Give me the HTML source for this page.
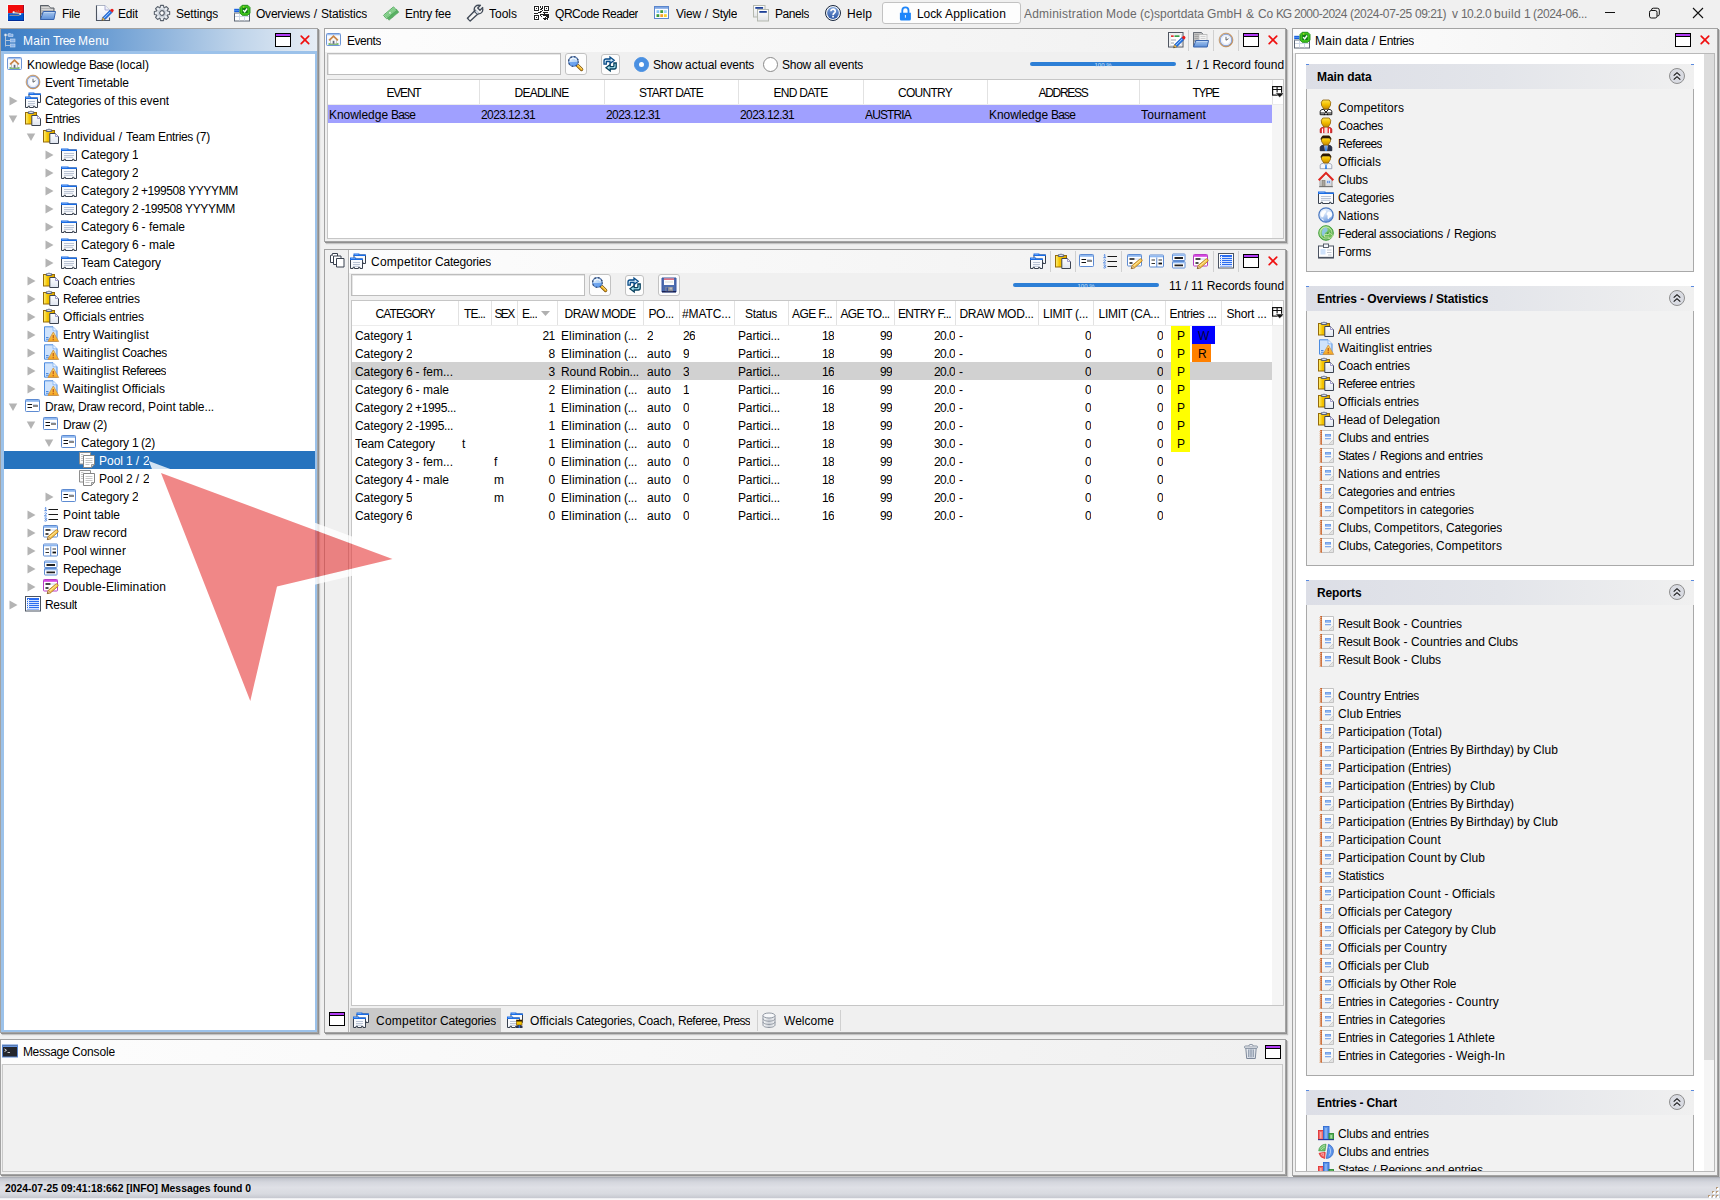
<!DOCTYPE html><html lang="en"><head><meta charset="utf-8"><title>sportdata Administration</title><style>
*{box-sizing:border-box;margin:0;padding:0}
html,body{width:1720px;height:1200px;overflow:hidden}
body{position:relative;background:#f0f0f0;font-family:"Liberation Sans",sans-serif;font-size:12px;color:#000;line-height:18px}
.b{position:absolute}
.t{position:absolute;white-space:nowrap;height:18px;line-height:18px;overflow:hidden;margin-top:1px}
.i{position:absolute;display:block;overflow:visible}
.wd{display:inline-block;white-space:nowrap}
.c{text-align:center}
.r{text-align:right}
.bd{font-weight:bold}
.w{color:#fff}
.g{color:#6a6a6a}
.panel{border:1px solid #a3a3a3;box-shadow:1px 1px 0 #8f8f8f,2px 2px 1px #c4c4c4;background:#f0f0f0}
.ttl{background:linear-gradient(to right,#fdfdfd 0%,#f7f7f7 50%,#f0f0f0 100%)}
.btn{border:1px solid #c2c2c2;border-radius:3px;background:#fdfdfd}
.inp{border:1px solid #bdbdbd;background:#fff;box-shadow:inset 1px 1px 0 #e6e6e6}
.tbl{border:1px solid #c6c6c6;background:#fff}
.vs{width:1px;background:#e2e2e2}
.sep{width:1px;background:#d0d0d0}
.gh{background:linear-gradient(to right,#dcdee6 0%,#e3e5ea 50%,#f0f0f0 100%)}
.gb{border:1px solid #a9a9a9;border-top:none;background:#f2f2f2}
.chev{border:1px solid #8e8e8e;border-radius:50%;background:#d9dbe2}
</style></head><body>
<svg width="0" height="0" style="position:absolute"><defs><linearGradient id="g1" x1="0" y1="0" x2="0" y2="1"><stop offset="0" stop-color="#a9c8ef"/><stop offset="1" stop-color="#5c8fd8"/></linearGradient><linearGradient id="g2" x1="0" y1="0" x2="0" y2="1"><stop offset="0" stop-color="#ffffff"/><stop offset="1" stop-color="#e3e8f4"/></linearGradient><linearGradient id="g4" x1="0" y1="0" x2="0" y2="1"><stop offset="0" stop-color="#ffffff"/><stop offset="1" stop-color="#e2e4e6"/></linearGradient><linearGradient id="g5" x1="0" y1="0" x2="0" y2="1"><stop offset="0" stop-color="#7ea3dc"/><stop offset="1" stop-color="#2f59a6"/></linearGradient><linearGradient id="g6" x1="0" y1="0" x2="0" y2="1"><stop offset="0" stop-color="#ffffff"/><stop offset="1" stop-color="#eef3fb"/></linearGradient><linearGradient id="g7" x1="0" y1="0" x2="1" y2="1"><stop offset="0" stop-color="#e9c9a0"/><stop offset="1" stop-color="#c08850"/></linearGradient><linearGradient id="g8" x1="0" y1="0" x2="0" y2="1"><stop offset="0" stop-color="#ffffff"/><stop offset="1" stop-color="#dfe5f0"/></linearGradient><linearGradient id="g9" x1="0" y1="0" x2="1" y2="0"><stop offset="0" stop-color="#fff27a"/><stop offset="0.35" stop-color="#f5c400"/><stop offset="1" stop-color="#e0a800"/></linearGradient><linearGradient id="g10" x1="0" y1="0" x2="0" y2="1"><stop offset="0" stop-color="#ffd86a"/><stop offset="1" stop-color="#f3a21c"/></linearGradient><linearGradient id="g11" x1="0" y1="0" x2="1" y2="1"><stop offset="0" stop-color="#e8f4ff"/><stop offset="1" stop-color="#8fbcee"/></linearGradient><linearGradient id="g12" x1="0" y1="0" x2="0" y2="1"><stop offset="0" stop-color="#ffe34a"/><stop offset="0.5" stop-color="#f3bf00"/><stop offset="1" stop-color="#c88a00"/></linearGradient><linearGradient id="g13" x1="0" y1="0" x2="0" y2="1"><stop offset="0" stop-color="#fafafa"/><stop offset="1" stop-color="#d4d4d4"/></linearGradient><linearGradient id="g14" x1="0" y1="0" x2="0.5" y2="1"><stop offset="0" stop-color="#f6faff"/><stop offset="0.55" stop-color="#c9dcf6"/><stop offset="1" stop-color="#6f9be0"/></linearGradient><linearGradient id="g15" x1="0" y1="0" x2="0.7" y2="1"><stop offset="0" stop-color="#b8ec9a"/><stop offset="1" stop-color="#3f9e3a"/></linearGradient><linearGradient id="g16" x1="0" y1="0" x2="0" y2="1"><stop offset="0" stop-color="#ffffff"/><stop offset="1" stop-color="#efefef"/></linearGradient><linearGradient id="g17" x1="0" y1="0" x2="1" y2="0"><stop offset="0" stop-color="#f4f6f9"/><stop offset="0.5" stop-color="#c2cad6"/><stop offset="1" stop-color="#eef0f4"/></linearGradient><linearGradient id="g18" x1="0" y1="0" x2="1" y2="0"><stop offset="0" stop-color="#fafbfc"/><stop offset="0.5" stop-color="#cfd3d9"/><stop offset="1" stop-color="#f1f2f4"/></linearGradient></defs></svg>
<svg class="i" style="left:8px;top:5px" width="16" height="16" viewBox="0 0 16 16" ><rect x="-.7" y="-.7" width="17.400" height="17.400" fill="#fbfbfb"/><rect width="16" height="8.200" fill="#f20b0b"/><rect y="8.200" width="16" height="7.800" fill="#0055cc"/><rect y="15" width="16" height="1" fill="#002a96"/><rect x="15.200" width=".8" height="16" fill="#00106a" opacity=".45"/><path d="M7.500 5.600h7" stroke="#8a9a5a" stroke-width=".7" stroke-dasharray="1 1.500"/><path d="M8 6.600h5" stroke="#e85030" stroke-width=".7"/><path d="M5.200 7.400l7 1.400" stroke="#a9a4a8" stroke-width="1.600" stroke-linecap="round"/><circle cx="5.700" cy="7.200" r="1" fill="#f4f8fa"/><circle cx="12.200" cy="9" r="1.100" fill="#f2f2f0"/><path d="M1.500 10.500h10" stroke="#9a948e" stroke-width=".9"/><path d="M2 9.600h8.500" stroke="#3a6ac8" stroke-width=".6"/></svg>
<svg class="i" style="left:40px;top:5px" width="16" height="16" viewBox="0 0 16 16" ><path d="M.5 .5h8l2 2.500h3.500v6h-13.500z" fill="#b5b5b5" stroke="#5a6068"/><path d="M1.500 2.500h8M1.500 4.500h11.500" stroke="#d8d8d8"/><path d="M.5 .5v14" stroke="#5a6068"/><path d="M3.300 6.500h12.200l-1.600 8h-13.400z" fill="url(#g1)" stroke="#3763ad"/><path d="M4 7.500h10.500" stroke="#c4daf5" stroke-width=".8"/></svg>
<span class="t m" style="left:62px;top:4px;letter-spacing:-0.34px;">File</span>
<svg class="i" style="left:96px;top:5px" width="16" height="16" viewBox="0 0 16 16" ><path d="M.5 .5h8.500l4.500 4.500v10.500h-13z" fill="url(#g2)"/><path d="M.5 .3v15.200h13v-3" fill="none" stroke="#4d5562" stroke-width="1.100"/><path d="M.5 .5h8.500l4.500 4.500v4" fill="none" stroke="#9aa3b5" stroke-width=".8"/><path d="M9 .5v4.500h4.500" fill="#eef1f8" stroke="#9a9ccc" stroke-width=".8"/><path d="M5.8 15.6l.9-3.200 7.200-7.200 2.300 2.300-7.200 7.200z" fill="#1f6fe0" stroke="#1a4fb0" stroke-width=".5"/><path d="M7.699999999999999 13.5l6.600-6.600" stroke="#bfe0ff" stroke-width=".9"/><path d="M13.899999999999999 5.199999999999999l1-1a1.300 1.300 0 0 1 2.300 2.300l-1 1z" fill="#e81c1c"/><path d="M5.8 15.6l.9-3.200 2.300 2.300z" fill="#f4c65c" stroke="#a8761a" stroke-width=".5"/><path d="M5.8 15.6l.4-1.300.9.900z" fill="#222"/></svg>
<span class="t m" style="left:118px;top:4px;letter-spacing:-0.17px;">Edit</span>
<svg class="i" style="left:154px;top:5px" width="16" height="16" viewBox="0 0 16 16" ><path d="M13.25 6.06L15.66 6.53L15.66 9.47L13.25 9.94L13.09 10.34L14.46 12.37L12.37 14.46L10.34 13.09L9.94 13.25L9.47 15.66L6.53 15.66L6.06 13.25L5.66 13.09L3.63 14.46L1.54 12.37L2.91 10.34L2.75 9.94L0.34 9.47L0.34 6.53L2.75 6.06L2.91 5.66L1.54 3.63L3.63 1.54L5.66 2.91L6.06 2.75L6.53 0.34L9.47 0.34L9.94 2.75L10.34 2.91L12.37 1.54L14.46 3.63L13.09 5.66z" fill="#e9edf2" stroke="#59616c" stroke-width="1.100" stroke-linejoin="round"/><circle cx="8" cy="8" r="3.900" fill="none" stroke="#b9c0ca" stroke-width=".8"/><circle cx="8" cy="8" r="2.300" fill="#fff" stroke="#59616c" stroke-width="1.200"/></svg>
<span class="t m" style="left:176px;top:4px;letter-spacing:-0.17px;">Settings</span>
<svg class="i" style="left:234px;top:5px" width="16" height="16" viewBox="0 0 16 16" ><rect x=".5" y="8" width="15" height="8" fill="#fff" stroke="#5b6472"/><path d="M.5 8h15" stroke="#aab4c4"/><path d="M1 11.500h14M5.500 8.500v7M10.500 8.500v7" stroke="#cfd9e8"/><rect x=".2" y="3.800" width="5.300" height="3.200" fill="#1660e0"/><path d="M.2 5.400h5.300" stroke="#6fa2f5" stroke-width=".7"/><path d="M8.200 .3h5.600l2.200 2.200v5.600l-2.200 2.200h-5.600l-2.200-2.200v-5.600z" fill="#3fc21d" stroke="#1b8a12" stroke-width=".9"/><rect x="8.300" y="2.600" width="5.400" height="5.400" fill="#0f7a14"/><path d="M9.200 5.100l1.500 1.700 2.400-3.300" fill="none" stroke="#fff" stroke-width="1.400"/><rect x="9" y="1.500" width="1.300" height="1" fill="#e8f020"/></svg>
<span class="t m" style="left:256px;top:4px;word-spacing:-0.34px;"><span class="wd" style="width:54.0px;letter-spacing:-0.22px">Overviews</span> <span class="wd" style="width:5.0px;text-align:center">/</span> <span class="wd" style="width:46.0px;letter-spacing:-0.20px">Statistics</span></span>
<svg class="i" style="left:383px;top:5px" width="16" height="16" viewBox="0 0 16 16" ><g transform="translate(8 8.300) scale(.8) rotate(-40) translate(-8 -8)"><rect x=".5" y="8" width="16" height="5.200" rx=".5" fill="#58b062" stroke="#3f9049" stroke-width=".9" stroke-dasharray="1.200 .8"/><rect x="-.8" y="3.800" width="16.500" height="5.800" rx=".5" fill="#a4e0a8" stroke="#4fa65a" stroke-width="1"/><rect x=".8" y="5.100" width="13.300" height="3.200" fill="#86d08c" stroke="#63b86c" stroke-width=".6"/><circle cx="7.400" cy="6.700" r="1.500" fill="#eefaee" stroke="#63b86c" stroke-width=".5"/></g></svg>
<span class="t m" style="left:405px;top:4px;word-spacing:-0.34px;"><span class="wd" style="width:27.0px;letter-spacing:-0.20px">Entry</span> <span class="wd" style="width:16.0px;letter-spacing:-0.22px">fee</span></span>
<svg class="i" style="left:467px;top:5px" width="16" height="16" viewBox="0 0 16 16" ><path d="M.4 13.200l7.800-8 3.200 3.200-8.200 7.600z" fill="url(#g3)" stroke="#424b58" stroke-width="1.350" stroke-linejoin="round"/><path d="M2.600 14.500l7.300-7.300" stroke="#fff" stroke-width="1"/><circle cx="11.500" cy="4.500" r="4.300" fill="url(#g3)" stroke="#424b58" stroke-width="1.350"/><path d="M10.720 3.020l3.890-3.890 2.260 2.260-3.890 3.890z" fill="#f0f0f0"/><path d="M13.700 0l-2.980 3.020 2.260 2.260 3.020-2.980" fill="none" stroke="#424b58" stroke-width="1.350" stroke-linejoin="round"/><path d="M8.600 5.600l2.800 2.800" stroke="#cfd8e4" stroke-width="1.600"/></svg>
<span class="t m" style="left:489px;top:4px;">Tools</span>
<svg class="i" style="left:534px;top:6px" width="15" height="14" viewBox="0 0 15 14" ><rect x="-.5" y="-.5" width="16" height="15" fill="#fff"/><path d="M0 0h5v1h-5zM6 0h1v1h-1zM8 0h1v1h-1zM10 0h5v1h-5zM0 1h1v1h-1zM4 1h1v1h-1zM6 1h1v1h-1zM8 1h1v1h-1zM10 1h1v1h-1zM14 1h1v1h-1zM0 2h1v1h-1zM2 2h1v1h-1zM4 2h1v1h-1zM7 2h2v1h-2zM10 2h1v1h-1zM12 2h1v1h-1zM14 2h1v1h-1zM0 3h1v1h-1zM4 3h1v1h-1zM6 3h2v1h-2zM10 3h1v1h-1zM14 3h1v1h-1zM0 4h5v1h-5zM8 4h1v1h-1zM10 4h5v1h-5zM6 5h2v1h-2zM4 6h3v1h-3zM9 6h5v1h-5zM0 7h4v1h-4zM10 7h1v1h-1zM6 8h9v1h-9zM0 9h5v1h-5zM6 9h1v1h-1zM9 9h6v1h-6zM0 10h1v1h-1zM4 10h1v1h-1zM7 10h1v1h-1zM12 10h3v1h-3zM0 11h1v1h-1zM2 11h1v1h-1zM4 11h1v1h-1zM11 11h1v1h-1zM13 11h2v1h-2zM0 12h1v1h-1zM4 12h1v1h-1zM9 12h5v1h-5zM0 13h5v1h-5zM10 13h2v1h-2zM13 13h1v1h-1z" fill="#222" shape-rendering="crispEdges"/></svg>
<span class="t m" style="left:555px;top:4px;word-spacing:-0.34px;"><span class="wd" style="width:44.0px;letter-spacing:-0.45px">QRCode</span> <span class="wd" style="width:36.0px;letter-spacing:-0.56px">Reader</span></span>
<svg class="i" style="left:654px;top:5px" width="16" height="16" viewBox="0 0 16 16" ><rect x=".5" y="1.500" width="14" height="12" fill="#fdfeff" stroke="#5b86cc"/><rect x="1" y="2" width="13" height="1.800" fill="#7ea6e4"/><rect x="2.500" y="5.200" width="2.800" height="2.800" fill="#86c4f6"/><rect x="6.300" y="5.200" width="2.800" height="2.800" fill="#3c9c3e"/><rect x="10" y="5.200" width="2.800" height="2.800" fill="#9fd4fa"/><rect x="2.500" y="9.200" width="2.800" height="2.800" fill="#3c9c3e"/><rect x="6.300" y="9.200" width="2.800" height="2.800" fill="#f6a02c"/><rect x="10" y="9.200" width="2.800" height="2.800" fill="#f7d22e"/></svg>
<span class="t m" style="left:676px;top:4px;word-spacing:-0.34px;"><span class="wd" style="width:25.0px;letter-spacing:-0.20px">View</span> <span class="wd" style="width:5.0px;text-align:center">/</span> <span class="wd" style="width:25.0px;letter-spacing:-0.33px">Style</span></span>
<svg class="i" style="left:753px;top:5px" width="16" height="16" viewBox="0 0 16 16" ><rect x=".5" y=".5" width="11.500" height="11.500" fill="url(#g4)" stroke="#b5b9b0"/><rect x="2.300" y="2" width="7.800" height="1.800" fill="#1c3f96"/><rect x="4.500" y="4.500" width="11" height="11.500" fill="url(#g4)" stroke="#b5b9b0"/><rect x="6.300" y="6" width="7.500" height="1.800" fill="#1c3f96"/></svg>
<span class="t m" style="left:775px;top:4px;letter-spacing:-0.45px;">Panels</span>
<svg class="i" style="left:825px;top:5px" width="16" height="16" viewBox="0 0 16 16" ><circle cx="8" cy="8" r="7.500" fill="#f2f6fb" stroke="#17253c" stroke-width="1"/><circle cx="8" cy="8" r="5.900" fill="url(#g5)"/><path d="M5.900 6.300a2.200 2.100 0 1 1 3.400 1.700c-.8.600-1.200.9-1.200 1.900" fill="none" stroke="#fff" stroke-width="1.700"/><rect x="7.200" y="10.800" width="1.700" height="1.700" fill="#fff"/></svg>
<span class="t m" style="left:847px;top:4px;letter-spacing:0.08px;">Help</span>
<div class="b btn" style="left:882px;top:2px;width:139px;height:22px;"></div>
<svg class="i" style="left:899px;top:5.5px" width="16" height="16" viewBox="0 0 16 16" ><path d="M3.300 7.500v-3a3.100 3.100 0 0 1 6.200 0v3" fill="none" stroke="#1e86fa" stroke-width="1.800"/><path d="M.9 6.800h11v6.200a1.500 1.500 0 0 1-1.500 1.500h-8a1.500 1.500 0 0 1-1.500-1.500z" fill="#1e86fa"/><rect x="5.900" y="9" width="1" height="2.700" fill="#e8f2ff"/></svg>
<span class="t m" style="left:917px;top:4px;word-spacing:-0.34px;"><span class="wd" style="width:25.0px;letter-spacing:-0.09px">Lock</span> <span class="wd" style="width:61.0px;letter-spacing:0.21px">Application</span></span>
<span class="t g m" style="left:1024px;top:4px;word-spacing:-0.34px;white-space:pre"><span class="wd" style="width:79.0px;letter-spacing:0.21px">Administration</span> <span class="wd" style="width:31.0px;letter-spacing:0.25px">Mode</span> <span class="wd" style="width:64.0px;letter-spacing:-0.00px">(c)sportdata</span> <span class="wd" style="width:35.0px;letter-spacing:0.08px">GmbH</span> <span class="wd" style="width:10.0px;text-align:center">&amp;</span> <span class="wd" style="width:15.0px;letter-spacing:-0.17px">Co</span> <span class="wd" style="width:15.0px;letter-spacing:-1.16px">KG</span> <span class="wd" style="width:53.0px;letter-spacing:-0.49px">2000-2024</span> <span class="wd" style="width:62.0px;letter-spacing:-0.31px">(2024-07-25</span> <span class="wd" style="width:31.0px;letter-spacing:-0.50px">09:21)</span>  <span class="wd" style="width:6.0px;text-align:center">v</span> <span class="wd" style="width:30.0px;letter-spacing:-0.56px">10.2.0</span> <span class="wd" style="width:27.0px;letter-spacing:0.33px">build</span> <span class="wd" style="width:6.0px;text-align:center">1</span> <span class="wd" style="width:54.0px;letter-spacing:-0.37px">(2024-06...</span></span>
<svg class="i" style="left:1596px;top:0" width="124" height="27" viewBox="0 0 124 27"><path d="M9 12.500h10" stroke="#111" stroke-width="1"/><rect x="53.500" y="10.500" width="7.500" height="7.500" rx="1.800" fill="none" stroke="#111"/><path d="M55.500 10.500v-.5a1.800 1.800 0 0 1 1.800-1.800h4a2 2 0 0 1 2 2v4a1.800 1.800 0 0 1-1.800 1.800h-.5" fill="none" stroke="#111"/><path d="M97 8l10 10M107 8l-10 10" stroke="#111" stroke-width="1.100"/></svg>
<div class="b panel" style="left:0px;top:28px;width:318px;height:1005px;background:#fff"></div>
<div class="b" style="left:1px;top:29px;width:316px;height:23px;background:linear-gradient(to right,#3a7cc5 0%,#5d94cf 25%,#8db3dc 50%,#bfd4ea 75%,#e6edf5 100%)"></div>
<div class="b" style="left:1px;top:51px;width:316px;height:981px;border:3px solid #9cc2ea;border-right-width:2px;border-bottom-width:2px;background:#fff"></div>
<svg class="i" style="left:4px;top:32.5px" width="16" height="16" viewBox="0 0 16 16" ><g opacity=".9"><path d="M1.500 2v11.500M1.500 2h3M1.500 7.500h4.500M1.500 12.500h4.500" fill="none" stroke="#b9c9dc" stroke-width="1"/><circle cx="1.500" cy="2" r="1.300" fill="#fff" stroke="#9fb2c8" stroke-width=".5"/><path d="M4.500 .5h1.800l.7 .7h2v2.300h-4.500z" fill="#8fb8ee" stroke="#dfeaf8" stroke-width=".6"/><rect x="6.500" y="6" width="4.500" height="3" fill="#8fb8ee" stroke="#dfeaf8" stroke-width=".6"/><rect x="6.500" y="11" width="4.500" height="3" fill="#8fb8ee" stroke="#dfeaf8" stroke-width=".6"/></g></svg>
<span class="t w" style="left:23px;top:31px;word-spacing:-0.34px;"><span class="wd" style="width:27.0px;letter-spacing:0.25px">Main</span> <span class="wd" style="width:22.0px;letter-spacing:-0.56px">Tree</span> <span class="wd" style="width:31.0px;letter-spacing:0.25px">Menu</span></span>
<svg class="i" style="left:275px;top:32px" width="16" height="16" viewBox="0 0 16 16" ><rect x="0" y="1" width="16" height="14" fill="#000"/><rect x="1" y="2" width="14" height="2" fill="#b23cf5"/><rect x="1" y="5" width="14" height="9" fill="#fff"/></svg>
<svg class="i" style="left:299.5px;top:34.5px" width="10" height="10" viewBox="0 0 10 10" ><path d="M1.200 1.200l7.500 7.500M8.700 1.200l-7.500 7.500" stroke="#f01010" stroke-width="1.700" stroke-linecap="round"/></svg>
<svg class="i" style="left:7px;top:56px" width="16" height="16" viewBox="0 0 16 16" ><rect x=".5" y="1.500" width="14" height="12" rx="1" fill="url(#g6)" stroke="#6d95d6"/><rect x="1" y="2" width="13" height="1.300" fill="#a5c2ee"/><path d="M2.500 12h10" stroke="#5aad46" stroke-width="1.500"/><path d="M4.500 7.500v4.300h6v-4.300l-3-2.800z" fill="#f7f7f7" stroke="#a3a3a3" stroke-width=".6"/><path d="M3.100 8.300l4.400-4.100 4.400 4.100" fill="none" stroke="#c98445" stroke-width="1.700"/><rect x="6.700" y="8.800" width="1.700" height="3" fill="#5f6b80"/></svg>
<span class="t" style="left:27px;top:55px;word-spacing:-0.34px;"><span class="wd" style="width:59.0px;letter-spacing:-0.04px">Knowledge</span> <span class="wd" style="width:24.0px;letter-spacing:-0.84px">Base</span> <span class="wd" style="width:33.0px;letter-spacing:0.04px">(local)</span></span>
<svg class="i" style="left:25px;top:74px" width="16" height="16" viewBox="0 0 16 16" ><circle cx="8" cy="8" r="6.900" fill="url(#g7)" stroke="#b07a45" stroke-width=".6"/><circle cx="8" cy="8" r="5.700" fill="#fdfdff" stroke="#7d9fe0" stroke-width=".9"/><circle cx="8" cy="8" r="4.300" fill="none" stroke="#d8e2f5" stroke-width=".7"/><path d="M8 4.800v3.400l2.500-1.500" fill="none" stroke="#4a5058" stroke-width=".9"/></svg>
<span class="t" style="left:45px;top:73px;word-spacing:-0.34px;"><span class="wd" style="width:29.0px;letter-spacing:-0.33px">Event</span> <span class="wd" style="width:52.0px;letter-spacing:-0.03px">Timetable</span></span>
<svg class="i" style="left:9px;top:95.5px" width="9" height="10" viewBox="0 0 9 10"><path d="M.5 .5l8 4.500-8 4.500z" fill="#b4b4b4"/></svg>
<svg class="i" style="left:25px;top:92px" width="16" height="16" viewBox="0 0 16 16" ><path d="M4.0 2.0h11.5v8.5h-2.500v-1.200h-1.500v1.200h-3.5v-1.200h-1.500v1.200h-2.500z" fill="#f8fafd" stroke="#39414e"/><path d="M3.5 0.5h5.9v1h6.6v1.600h-12.5z" fill="#1a6de6"/><path d="M4.5 1.3h3.9" stroke="#8fbaf8" stroke-width=".7"/><path d="M0.5 6.0h12v9.5h-2.500v-1.200h-1.500v1.200h-4v-1.200h-1.500v1.200h-2.500z" fill="#f8fafd" stroke="#39414e"/><path d="M0 4.5h6.1v1h6.9v1.600h-13z" fill="#1a6de6"/><path d="M1 5.3h4.1" stroke="#8fbaf8" stroke-width=".7"/><path d="M3 9.5h7M3 11.5h7M3 13.3h6" stroke="#aab6ca" stroke-width=".8"/></svg>
<span class="t" style="left:45px;top:91px;word-spacing:-0.34px;"><span class="wd" style="width:56.0px;letter-spacing:-0.20px">Categories</span> <span class="wd" style="width:11.0px;letter-spacing:0.50px">of</span> <span class="wd" style="width:19.0px;letter-spacing:0.08px">this</span> <span class="wd" style="width:29.0px;letter-spacing:-0.07px">event</span></span>
<svg class="i" style="left:8px;top:115px" width="10" height="8.500" viewBox="0 0 10 9"><path d="M.5 .5h9l-4.500 8z" fill="#b4b4b4"/></svg>
<svg class="i" style="left:25px;top:110px" width="16" height="16" viewBox="0 0 16 16" ><rect x=".5" y="2.500" width="11" height="11.500" fill="url(#g9)" stroke="#956a08" stroke-width="1"/><path d="M3.300 3.500v-1.700h1.500a1.400 1.400 0 0 1 2.400 0h1.500v1.700z" fill="#dfe4ee" stroke="#4a5470" stroke-width=".9"/><path d="M6.800 5.500h5.700l3 3v7h-8.700z" fill="url(#g8)" stroke="#3c4350" stroke-width="1"/><path d="M12.500 5.500v3h3" fill="#f4f4fb" stroke="#8a86c0" stroke-width=".8"/></svg>
<span class="t" style="left:45px;top:109px;letter-spacing:-0.33px;">Entries</span>
<svg class="i" style="left:26px;top:133px" width="10" height="8.500" viewBox="0 0 10 9"><path d="M.5 .5h9l-4.500 8z" fill="#b4b4b4"/></svg>
<svg class="i" style="left:43px;top:128px" width="16" height="16" viewBox="0 0 16 16" ><rect x=".5" y="2.500" width="11" height="11.500" fill="url(#g9)" stroke="#956a08" stroke-width="1"/><path d="M3.300 3.500v-1.700h1.500a1.400 1.400 0 0 1 2.400 0h1.500v1.700z" fill="#dfe4ee" stroke="#4a5470" stroke-width=".9"/><path d="M6.800 5.500h5.700l3 3v7h-8.700z" fill="url(#g8)" stroke="#3c4350" stroke-width="1"/><path d="M12.500 5.500v3h3" fill="#f4f4fb" stroke="#8a86c0" stroke-width=".8"/></svg>
<span class="t" style="left:63px;top:127px;word-spacing:-0.34px;"><span class="wd" style="width:52.0px;letter-spacing:0.13px">Individual</span> <span class="wd" style="width:5.0px;text-align:center">/</span> <span class="wd" style="width:29.0px;letter-spacing:-0.09px">Team</span> <span class="wd" style="width:35.0px;letter-spacing:-0.33px">Entries</span> <span class="wd" style="width:14.0px;letter-spacing:-0.22px">(7)</span></span>
<svg class="i" style="left:45px;top:149.5px" width="9" height="10" viewBox="0 0 9 10"><path d="M.5 .5l8 4.500-8 4.500z" fill="#b4b4b4"/></svg>
<svg class="i" style="left:61px;top:146px" width="16" height="16" viewBox="0 0 16 16" ><path d="M0.5 4.0h15v10.5h-2.500v-1.200h-1.500v1.200h-7v-1.200h-1.500v1.200h-2.500z" fill="#f8fafd" stroke="#39414e"/><path d="M0 2.5h7.5v1h8.5v1.600h-16z" fill="#1a6de6"/><path d="M1 3.3h5.5" stroke="#8fbaf8" stroke-width=".7"/><path d="M3 7.5h10M3 9.5h10M3 11.3h9" stroke="#aab6ca" stroke-width=".8"/></svg>
<span class="t" style="left:81px;top:145px;word-spacing:-0.34px;"><span class="wd" style="width:48.0px;letter-spacing:-0.09px">Category</span> <span class="wd" style="width:6.0px;text-align:center">1</span></span>
<svg class="i" style="left:45px;top:167.5px" width="9" height="10" viewBox="0 0 9 10"><path d="M.5 .5l8 4.500-8 4.500z" fill="#b4b4b4"/></svg>
<svg class="i" style="left:61px;top:164px" width="16" height="16" viewBox="0 0 16 16" ><path d="M0.5 4.0h15v10.5h-2.500v-1.200h-1.500v1.200h-7v-1.200h-1.500v1.200h-2.500z" fill="#f8fafd" stroke="#39414e"/><path d="M0 2.5h7.5v1h8.5v1.600h-16z" fill="#1a6de6"/><path d="M1 3.3h5.5" stroke="#8fbaf8" stroke-width=".7"/><path d="M3 7.5h10M3 9.5h10M3 11.3h9" stroke="#aab6ca" stroke-width=".8"/></svg>
<span class="t" style="left:81px;top:163px;word-spacing:-0.34px;"><span class="wd" style="width:48.0px;letter-spacing:-0.09px">Category</span> <span class="wd" style="width:6.0px;text-align:center">2</span></span>
<svg class="i" style="left:45px;top:185.5px" width="9" height="10" viewBox="0 0 9 10"><path d="M.5 .5l8 4.500-8 4.500z" fill="#b4b4b4"/></svg>
<svg class="i" style="left:61px;top:182px" width="16" height="16" viewBox="0 0 16 16" ><path d="M0.5 4.0h15v10.5h-2.500v-1.200h-1.500v1.200h-7v-1.200h-1.500v1.200h-2.500z" fill="#f8fafd" stroke="#39414e"/><path d="M0 2.5h7.5v1h8.5v1.600h-16z" fill="#1a6de6"/><path d="M1 3.3h5.5" stroke="#8fbaf8" stroke-width=".7"/><path d="M3 7.5h10M3 9.5h10M3 11.3h9" stroke="#aab6ca" stroke-width=".8"/></svg>
<span class="t" style="left:81px;top:181px;word-spacing:-0.34px;"><span class="wd" style="width:48.0px;letter-spacing:-0.09px">Category</span> <span class="wd" style="width:6.0px;text-align:center">2</span> <span class="wd" style="width:44.0px;letter-spacing:-0.44px">+199508</span> <span class="wd" style="width:50.0px;letter-spacing:-0.33px">YYYYMM</span></span>
<svg class="i" style="left:45px;top:203.5px" width="9" height="10" viewBox="0 0 9 10"><path d="M.5 .5l8 4.500-8 4.500z" fill="#b4b4b4"/></svg>
<svg class="i" style="left:61px;top:200px" width="16" height="16" viewBox="0 0 16 16" ><path d="M0.5 4.0h15v10.5h-2.500v-1.200h-1.500v1.200h-7v-1.200h-1.500v1.200h-2.500z" fill="#f8fafd" stroke="#39414e"/><path d="M0 2.5h7.5v1h8.5v1.600h-16z" fill="#1a6de6"/><path d="M1 3.3h5.5" stroke="#8fbaf8" stroke-width=".7"/><path d="M3 7.5h10M3 9.5h10M3 11.3h9" stroke="#aab6ca" stroke-width=".8"/></svg>
<span class="t" style="left:81px;top:199px;word-spacing:-0.34px;"><span class="wd" style="width:48.0px;letter-spacing:-0.09px">Category</span> <span class="wd" style="width:6.0px;text-align:center">2</span> <span class="wd" style="width:41.0px;letter-spacing:-0.43px">-199508</span> <span class="wd" style="width:50.0px;letter-spacing:-0.33px">YYYYMM</span></span>
<svg class="i" style="left:45px;top:221.5px" width="9" height="10" viewBox="0 0 9 10"><path d="M.5 .5l8 4.500-8 4.500z" fill="#b4b4b4"/></svg>
<svg class="i" style="left:61px;top:218px" width="16" height="16" viewBox="0 0 16 16" ><path d="M0.5 4.0h15v10.5h-2.500v-1.200h-1.500v1.200h-7v-1.200h-1.500v1.200h-2.500z" fill="#f8fafd" stroke="#39414e"/><path d="M0 2.5h7.5v1h8.5v1.600h-16z" fill="#1a6de6"/><path d="M1 3.3h5.5" stroke="#8fbaf8" stroke-width=".7"/><path d="M3 7.5h10M3 9.5h10M3 11.3h9" stroke="#aab6ca" stroke-width=".8"/></svg>
<span class="t" style="left:81px;top:217px;word-spacing:-0.34px;"><span class="wd" style="width:48.0px;letter-spacing:-0.09px">Category</span> <span class="wd" style="width:6.0px;text-align:center">6</span> <span class="wd" style="width:5.0px;text-align:center">-</span> <span class="wd" style="width:36.0px;letter-spacing:-0.00px">female</span></span>
<svg class="i" style="left:45px;top:239.5px" width="9" height="10" viewBox="0 0 9 10"><path d="M.5 .5l8 4.500-8 4.500z" fill="#b4b4b4"/></svg>
<svg class="i" style="left:61px;top:236px" width="16" height="16" viewBox="0 0 16 16" ><path d="M0.5 4.0h15v10.5h-2.500v-1.200h-1.500v1.200h-7v-1.200h-1.500v1.200h-2.500z" fill="#f8fafd" stroke="#39414e"/><path d="M0 2.5h7.5v1h8.5v1.600h-16z" fill="#1a6de6"/><path d="M1 3.3h5.5" stroke="#8fbaf8" stroke-width=".7"/><path d="M3 7.5h10M3 9.5h10M3 11.3h9" stroke="#aab6ca" stroke-width=".8"/></svg>
<span class="t" style="left:81px;top:235px;word-spacing:-0.34px;"><span class="wd" style="width:48.0px;letter-spacing:-0.09px">Category</span> <span class="wd" style="width:6.0px;text-align:center">6</span> <span class="wd" style="width:5.0px;text-align:center">-</span> <span class="wd" style="width:26.0px;letter-spacing:-0.00px">male</span></span>
<svg class="i" style="left:45px;top:257.5px" width="9" height="10" viewBox="0 0 9 10"><path d="M.5 .5l8 4.500-8 4.500z" fill="#b4b4b4"/></svg>
<svg class="i" style="left:61px;top:254px" width="16" height="16" viewBox="0 0 16 16" ><path d="M0.5 4.0h15v10.5h-2.500v-1.200h-1.500v1.200h-7v-1.200h-1.500v1.200h-2.500z" fill="#f8fafd" stroke="#39414e"/><path d="M0 2.5h7.5v1h8.5v1.600h-16z" fill="#1a6de6"/><path d="M1 3.3h5.5" stroke="#8fbaf8" stroke-width=".7"/><path d="M3 7.5h10M3 9.5h10M3 11.3h9" stroke="#aab6ca" stroke-width=".8"/></svg>
<span class="t" style="left:81px;top:253px;word-spacing:-0.34px;"><span class="wd" style="width:29.0px;letter-spacing:-0.09px">Team</span> <span class="wd" style="width:48.0px;letter-spacing:-0.09px">Category</span></span>
<svg class="i" style="left:27px;top:275.5px" width="9" height="10" viewBox="0 0 9 10"><path d="M.5 .5l8 4.500-8 4.500z" fill="#b4b4b4"/></svg>
<svg class="i" style="left:43px;top:272px" width="16" height="16" viewBox="0 0 16 16" ><rect x=".5" y="2.500" width="11" height="11.500" fill="url(#g9)" stroke="#956a08" stroke-width="1"/><path d="M3.300 3.500v-1.700h1.500a1.400 1.400 0 0 1 2.400 0h1.500v1.700z" fill="#dfe4ee" stroke="#4a5470" stroke-width=".9"/><path d="M6.800 5.500h5.700l3 3v7h-8.700z" fill="url(#g8)" stroke="#3c4350" stroke-width="1"/><path d="M12.500 5.500v3h3" fill="#f4f4fb" stroke="#8a86c0" stroke-width=".8"/></svg>
<span class="t" style="left:63px;top:271px;word-spacing:-0.34px;"><span class="wd" style="width:34.0px;letter-spacing:-0.14px">Coach</span> <span class="wd" style="width:35.0px;letter-spacing:-0.15px">entries</span></span>
<svg class="i" style="left:27px;top:293.5px" width="9" height="10" viewBox="0 0 9 10"><path d="M.5 .5l8 4.500-8 4.500z" fill="#b4b4b4"/></svg>
<svg class="i" style="left:43px;top:290px" width="16" height="16" viewBox="0 0 16 16" ><rect x=".5" y="2.500" width="11" height="11.500" fill="url(#g9)" stroke="#956a08" stroke-width="1"/><path d="M3.300 3.500v-1.700h1.500a1.400 1.400 0 0 1 2.400 0h1.500v1.700z" fill="#dfe4ee" stroke="#4a5470" stroke-width=".9"/><path d="M6.800 5.500h5.700l3 3v7h-8.700z" fill="url(#g8)" stroke="#3c4350" stroke-width="1"/><path d="M12.500 5.500v3h3" fill="#f4f4fb" stroke="#8a86c0" stroke-width=".8"/></svg>
<span class="t" style="left:63px;top:289px;word-spacing:-0.34px;"><span class="wd" style="width:39.0px;letter-spacing:-0.53px">Referee</span> <span class="wd" style="width:35.0px;letter-spacing:-0.15px">entries</span></span>
<svg class="i" style="left:27px;top:311.5px" width="9" height="10" viewBox="0 0 9 10"><path d="M.5 .5l8 4.500-8 4.500z" fill="#b4b4b4"/></svg>
<svg class="i" style="left:43px;top:308px" width="16" height="16" viewBox="0 0 16 16" ><rect x=".5" y="2.500" width="11" height="11.500" fill="url(#g9)" stroke="#956a08" stroke-width="1"/><path d="M3.300 3.500v-1.700h1.500a1.400 1.400 0 0 1 2.400 0h1.500v1.700z" fill="#dfe4ee" stroke="#4a5470" stroke-width=".9"/><path d="M6.800 5.500h5.700l3 3v7h-8.700z" fill="url(#g8)" stroke="#3c4350" stroke-width="1"/><path d="M12.500 5.500v3h3" fill="#f4f4fb" stroke="#8a86c0" stroke-width=".8"/></svg>
<span class="t" style="left:63px;top:307px;word-spacing:-0.34px;"><span class="wd" style="width:43.0px;letter-spacing:0.06px">Officials</span> <span class="wd" style="width:35.0px;letter-spacing:-0.15px">entries</span></span>
<svg class="i" style="left:27px;top:329.5px" width="9" height="10" viewBox="0 0 9 10"><path d="M.5 .5l8 4.500-8 4.500z" fill="#b4b4b4"/></svg>
<svg class="i" style="left:43px;top:326px" width="16" height="16" viewBox="0 0 16 16" ><path d="M1.500 .8h8.500l4 4v10.400h-12.500z" fill="#cfe3fc" stroke="#4b8be0" stroke-width="1"/><path d="M10 .8v4h4" fill="#e8f2ff" stroke="#7fb0f0" stroke-width=".8"/><path d="M3 11.500h2.500M3 13.200h3" stroke="#4b8be0" stroke-width="1.100"/><path d="M10.300 6l5.400 9.500h-10.800z" fill="url(#g10)" stroke="#c8924a" stroke-width=".8" stroke-linejoin="round"/><path d="M10.300 9v3.300" stroke="#c8661a" stroke-width="1.400"/><rect x="9.600" y="13" width="1.400" height="1.300" fill="#c8661a"/></svg>
<span class="t" style="left:63px;top:325px;word-spacing:-0.34px;"><span class="wd" style="width:27.0px;letter-spacing:-0.20px">Entry</span> <span class="wd" style="width:56.0px;letter-spacing:0.16px">Waitinglist</span></span>
<svg class="i" style="left:27px;top:347.5px" width="9" height="10" viewBox="0 0 9 10"><path d="M.5 .5l8 4.500-8 4.500z" fill="#b4b4b4"/></svg>
<svg class="i" style="left:43px;top:344px" width="16" height="16" viewBox="0 0 16 16" ><path d="M1.500 .8h8.500l4 4v10.400h-12.500z" fill="#cfe3fc" stroke="#4b8be0" stroke-width="1"/><path d="M10 .8v4h4" fill="#e8f2ff" stroke="#7fb0f0" stroke-width=".8"/><path d="M3 11.500h2.500M3 13.200h3" stroke="#4b8be0" stroke-width="1.100"/><path d="M10.300 6l5.400 9.500h-10.800z" fill="url(#g10)" stroke="#c8924a" stroke-width=".8" stroke-linejoin="round"/><path d="M10.300 9v3.300" stroke="#c8661a" stroke-width="1.400"/><rect x="9.600" y="13" width="1.400" height="1.300" fill="#c8661a"/></svg>
<span class="t" style="left:63px;top:343px;word-spacing:-0.34px;"><span class="wd" style="width:56.0px;letter-spacing:0.16px">Waitinglist</span> <span class="wd" style="width:45.0px;letter-spacing:-0.34px">Coaches</span></span>
<svg class="i" style="left:27px;top:365.5px" width="9" height="10" viewBox="0 0 9 10"><path d="M.5 .5l8 4.500-8 4.500z" fill="#b4b4b4"/></svg>
<svg class="i" style="left:43px;top:362px" width="16" height="16" viewBox="0 0 16 16" ><path d="M1.500 .8h8.500l4 4v10.400h-12.500z" fill="#cfe3fc" stroke="#4b8be0" stroke-width="1"/><path d="M10 .8v4h4" fill="#e8f2ff" stroke="#7fb0f0" stroke-width=".8"/><path d="M3 11.500h2.500M3 13.200h3" stroke="#4b8be0" stroke-width="1.100"/><path d="M10.300 6l5.400 9.500h-10.800z" fill="url(#g10)" stroke="#c8924a" stroke-width=".8" stroke-linejoin="round"/><path d="M10.300 9v3.300" stroke="#c8661a" stroke-width="1.400"/><rect x="9.600" y="13" width="1.400" height="1.300" fill="#c8661a"/></svg>
<span class="t" style="left:63px;top:361px;word-spacing:-0.34px;"><span class="wd" style="width:56.0px;letter-spacing:0.16px">Waitinglist</span> <span class="wd" style="width:44.0px;letter-spacing:-0.59px">Referees</span></span>
<svg class="i" style="left:27px;top:383.5px" width="9" height="10" viewBox="0 0 9 10"><path d="M.5 .5l8 4.500-8 4.500z" fill="#b4b4b4"/></svg>
<svg class="i" style="left:43px;top:380px" width="16" height="16" viewBox="0 0 16 16" ><path d="M1.500 .8h8.500l4 4v10.400h-12.500z" fill="#cfe3fc" stroke="#4b8be0" stroke-width="1"/><path d="M10 .8v4h4" fill="#e8f2ff" stroke="#7fb0f0" stroke-width=".8"/><path d="M3 11.500h2.500M3 13.200h3" stroke="#4b8be0" stroke-width="1.100"/><path d="M10.300 6l5.400 9.500h-10.800z" fill="url(#g10)" stroke="#c8924a" stroke-width=".8" stroke-linejoin="round"/><path d="M10.300 9v3.300" stroke="#c8661a" stroke-width="1.400"/><rect x="9.600" y="13" width="1.400" height="1.300" fill="#c8661a"/></svg>
<span class="t" style="left:63px;top:379px;word-spacing:-0.34px;"><span class="wd" style="width:56.0px;letter-spacing:0.16px">Waitinglist</span> <span class="wd" style="width:43.0px;letter-spacing:0.06px">Officials</span></span>
<svg class="i" style="left:8px;top:403px" width="10" height="8.500" viewBox="0 0 10 9"><path d="M.5 .5h9l-4.500 8z" fill="#b4b4b4"/></svg>
<svg class="i" style="left:25px;top:398px" width="16" height="16" viewBox="0 0 16 16" ><rect x=".5" y="1.5" width="14" height="12" rx=".8" fill="#fff" stroke="#5d8bd2"/><rect x="1" y="2.0" width="13" height="1.800" fill="#8fb8f0"/><path d="M2.500 6.500h4.500M2.500 9.500h4.500" stroke="#111" stroke-width="1"/><path d="M8 7.500h5v1h-5z" fill="#111"/><path d="M7.500 6.500h5" stroke="#c9d6ea" stroke-width="1"/></svg>
<span class="t" style="left:45px;top:397px;word-spacing:-0.34px;"><span class="wd" style="width:30.0px;letter-spacing:-0.14px">Draw,</span> <span class="wd" style="width:27.0px;letter-spacing:-0.25px">Draw</span> <span class="wd" style="width:37.0px;letter-spacing:-0.05px">record,</span> <span class="wd" style="width:28.0px;letter-spacing:0.13px">Point</span> <span class="wd" style="width:35.0px;letter-spacing:-0.12px">table...</span></span>
<svg class="i" style="left:26px;top:421px" width="10" height="8.500" viewBox="0 0 10 9"><path d="M.5 .5h9l-4.500 8z" fill="#b4b4b4"/></svg>
<svg class="i" style="left:43px;top:416px" width="16" height="16" viewBox="0 0 16 16" ><rect x=".5" y="1.5" width="14" height="12" rx=".8" fill="#fff" stroke="#5d8bd2"/><rect x="1" y="2.0" width="13" height="1.800" fill="#8fb8f0"/><path d="M2.500 6.500h4.500M2.500 9.500h4.500" stroke="#111" stroke-width="1"/><path d="M8 7.500h5v1h-5z" fill="#111"/><path d="M7.500 6.500h5" stroke="#c9d6ea" stroke-width="1"/></svg>
<span class="t" style="left:63px;top:415px;word-spacing:-0.34px;"><span class="wd" style="width:27.0px;letter-spacing:-0.25px">Draw</span> <span class="wd" style="width:14.0px;letter-spacing:-0.22px">(2)</span></span>
<svg class="i" style="left:44px;top:439px" width="10" height="8.500" viewBox="0 0 10 9"><path d="M.5 .5h9l-4.500 8z" fill="#b4b4b4"/></svg>
<svg class="i" style="left:61px;top:434px" width="16" height="16" viewBox="0 0 16 16" ><rect x=".5" y="1.5" width="14" height="12" rx=".8" fill="#fff" stroke="#5d8bd2"/><rect x="1" y="2.0" width="13" height="1.800" fill="#8fb8f0"/><path d="M2.500 6.500h4.500M2.500 9.500h4.500" stroke="#111" stroke-width="1"/><path d="M8 7.500h5v1h-5z" fill="#111"/><path d="M7.500 6.500h5" stroke="#c9d6ea" stroke-width="1"/></svg>
<span class="t" style="left:81px;top:433px;word-spacing:-0.34px;"><span class="wd" style="width:48.0px;letter-spacing:-0.09px">Category</span> <span class="wd" style="width:6.0px;text-align:center">1</span> <span class="wd" style="width:14.0px;letter-spacing:-0.22px">(2)</span></span>
<div class="b" style="left:4px;top:451px;width:311px;height:18px;background:#2673be"></div>
<svg class="i" style="left:79px;top:452px" width="16" height="16" viewBox="0 0 16 16" ><path d="M.5 .5h11v11.500h-11z" fill="#fbfbfb" stroke="#8e8e8e"/><path d="M2 2.500h2.500M2 4.500h2.500M2 6.500h2.500M2 8.500h2.500" stroke="#c4c4c4" stroke-width="1"/><path d="M4.500 3.500h11v9l-3 3h-8z" fill="#fff" stroke="#858585"/><path d="M15.500 12.500h-3v3z" fill="#d4d4d4" stroke="#858585" stroke-width=".8"/><path d="M6.500 6.500h7M6.500 8.500h7M6.500 10.500h7M6.500 12.500h4" stroke="#c6c6c6" stroke-width="1"/></svg>
<span class="t w" style="left:99px;top:451px;word-spacing:-0.34px;"><span class="wd" style="width:24.0px;letter-spacing:-0.00px">Pool</span> <span class="wd" style="width:6.0px;text-align:center">1</span> <span class="wd" style="width:5.0px;text-align:center">/</span> <span class="wd" style="width:6.0px;text-align:center">2</span></span>
<svg class="i" style="left:79px;top:470px" width="16" height="16" viewBox="0 0 16 16" ><path d="M.5 .5h11v11.500h-11z" fill="#fbfbfb" stroke="#8e8e8e"/><path d="M2 2.500h2.500M2 4.500h2.500M2 6.500h2.500M2 8.500h2.500" stroke="#c4c4c4" stroke-width="1"/><path d="M4.500 3.500h11v9l-3 3h-8z" fill="#fff" stroke="#858585"/><path d="M15.500 12.500h-3v3z" fill="#d4d4d4" stroke="#858585" stroke-width=".8"/><path d="M6.500 6.500h7M6.500 8.500h7M6.500 10.500h7M6.500 12.500h4" stroke="#c6c6c6" stroke-width="1"/></svg>
<span class="t" style="left:99px;top:469px;word-spacing:-0.34px;"><span class="wd" style="width:24.0px;letter-spacing:-0.00px">Pool</span> <span class="wd" style="width:6.0px;text-align:center">2</span> <span class="wd" style="width:5.0px;text-align:center">/</span> <span class="wd" style="width:6.0px;text-align:center">2</span></span>
<svg class="i" style="left:45px;top:491.5px" width="9" height="10" viewBox="0 0 9 10"><path d="M.5 .5l8 4.500-8 4.500z" fill="#b4b4b4"/></svg>
<svg class="i" style="left:61px;top:488px" width="16" height="16" viewBox="0 0 16 16" ><rect x=".5" y="1.5" width="14" height="12" rx=".8" fill="#fff" stroke="#5d8bd2"/><rect x="1" y="2.0" width="13" height="1.800" fill="#8fb8f0"/><path d="M2.500 6.500h4.500M2.500 9.500h4.500" stroke="#111" stroke-width="1"/><path d="M8 7.500h5v1h-5z" fill="#111"/><path d="M7.500 6.500h5" stroke="#c9d6ea" stroke-width="1"/></svg>
<span class="t" style="left:81px;top:487px;word-spacing:-0.34px;"><span class="wd" style="width:48.0px;letter-spacing:-0.09px">Category</span> <span class="wd" style="width:6.0px;text-align:center">2</span></span>
<svg class="i" style="left:27px;top:509.5px" width="9" height="10" viewBox="0 0 9 10"><path d="M.5 .5l8 4.500-8 4.500z" fill="#b4b4b4"/></svg>
<svg class="i" style="left:43px;top:506px" width="16" height="16" viewBox="0 0 16 16" ><path d="M5.500 3.500h9.500M5.500 8.500h9.500M5.500 13.500h9.500" stroke="#1a1a1a" stroke-width="1"/><path d="M1.800 2.200l1-.7v3M1.300 4.700h2.700M1.500 7.300c.8-.9 2.200-.6 2 .4-.1.700-1.800 1.500-2.100 2.300h2.500M1.500 12.200c.9-.7 2.300-.4 2.100.4-.1.500-.8.700-1.400.7.800 0 1.600.3 1.500 1-.1.900-1.600 1-2.300.4" fill="none" stroke="#3f7de0" stroke-width=".9"/></svg>
<span class="t" style="left:63px;top:505px;word-spacing:-0.34px;"><span class="wd" style="width:28.0px;letter-spacing:0.13px">Point</span> <span class="wd" style="width:26.0px;letter-spacing:-0.00px">table</span></span>
<svg class="i" style="left:27px;top:527.5px" width="9" height="10" viewBox="0 0 9 10"><path d="M.5 .5l8 4.500-8 4.500z" fill="#b4b4b4"/></svg>
<svg class="i" style="left:43px;top:524px" width="16" height="16" viewBox="0 0 16 16" ><rect x=".5" y="1.5" width="14" height="11.5" rx=".8" fill="#fff" stroke="#5d8bd2"/><rect x="1" y="2.0" width="13" height="1.800" fill="#8fb8f0"/><path d="M2.500 6h5M2.500 10h3" stroke="#111" stroke-width="1.300"/><path d="M8 6h4.500" stroke="#c9d6ea"/><path d="M4.3 15.6l1-3.300 7.600-6.300c1.300-.9 3 1 2 2.300l-7.300 6.500z" fill="#f8c74a" stroke="#a8721c" stroke-width=".8" stroke-linejoin="round"/><path d="M6.1 13.399999999999999l7.500-6.400" stroke="#fde9a8" stroke-width=".9"/><path d="M4.3 15.6l1-3.300 2.300 2.500z" fill="#f0d2a2" stroke="#a8721c" stroke-width=".5"/><path d="M4.3 15.6l.4-1.400 1 1z" fill="#2a2a2a"/></svg>
<span class="t" style="left:63px;top:523px;word-spacing:-0.34px;"><span class="wd" style="width:27.0px;letter-spacing:-0.25px">Draw</span> <span class="wd" style="width:34.0px;letter-spacing:-0.00px">record</span></span>
<svg class="i" style="left:27px;top:545.5px" width="9" height="10" viewBox="0 0 9 10"><path d="M.5 .5l8 4.500-8 4.500z" fill="#b4b4b4"/></svg>
<svg class="i" style="left:43px;top:542px" width="16" height="16" viewBox="0 0 16 16" ><rect x=".5" y="2" width="14" height="12" rx=".8" fill="#fff" stroke="#5d8bd2"/><rect x="1" y="2.5" width="13" height="1.800" fill="#8fb8f0"/><path d="M7.750 4.500v9.500" stroke="#5d8bd2"/><path d="M2.500 7h3.500M9.500 7h3.500M2.500 10.500h3.500" stroke="#333" stroke-width="1.100"/><path d="M9.500 10.500h3.500" stroke="#111" stroke-width="1.800"/></svg>
<span class="t" style="left:63px;top:541px;word-spacing:-0.34px;"><span class="wd" style="width:24.0px;letter-spacing:-0.00px">Pool</span> <span class="wd" style="width:36.0px;letter-spacing:0.11px">winner</span></span>
<svg class="i" style="left:27px;top:563.5px" width="9" height="10" viewBox="0 0 9 10"><path d="M.5 .5l8 4.500-8 4.500z" fill="#b4b4b4"/></svg>
<svg class="i" style="left:43px;top:560px" width="16" height="16" viewBox="0 0 16 16" ><rect x="1.500" y="1" width="12.500" height="6.500" rx=".6" fill="#fff" stroke="#5d8bd2"/><rect x="2" y="1.500" width="11.500" height="1.600" fill="#8fb8f0"/><rect x="1.500" y="8.500" width="12.500" height="6.500" rx=".6" fill="#fff" stroke="#5d8bd2"/><rect x="2" y="9" width="11.500" height="1.300" fill="#8fb8f0"/><path d="M3.500 5h8.500M3.500 12.300h8.500" stroke="#222" stroke-width="1.800"/></svg>
<span class="t" style="left:63px;top:559px;letter-spacing:-0.38px;">Repechage</span>
<svg class="i" style="left:27px;top:581.5px" width="9" height="10" viewBox="0 0 9 10"><path d="M.5 .5l8 4.500-8 4.500z" fill="#b4b4b4"/></svg>
<svg class="i" style="left:43px;top:578px" width="16" height="16" viewBox="0 0 16 16" ><rect x=".5" y="1.5" width="14" height="11.5" rx=".8" fill="#fff" stroke="#b73cc4"/><rect x="1" y="2.0" width="13" height="1.800" fill="#d548e0"/><path d="M2.500 6h5M2.500 10h3" stroke="#111" stroke-width="1.300"/><path d="M8 6h4.500" stroke="#c9d6ea"/><path d="M4.3 15.6l1-3.300 7.600-6.300c1.300-.9 3 1 2 2.300l-7.300 6.500z" fill="#f8c74a" stroke="#a8721c" stroke-width=".8" stroke-linejoin="round"/><path d="M6.1 13.399999999999999l7.500-6.400" stroke="#fde9a8" stroke-width=".9"/><path d="M4.3 15.6l1-3.300 2.300 2.500z" fill="#f0d2a2" stroke="#a8721c" stroke-width=".5"/><path d="M4.3 15.6l.4-1.400 1 1z" fill="#2a2a2a"/></svg>
<span class="t" style="left:63px;top:577px;letter-spacing:0.13px;">Double-Elimination</span>
<svg class="i" style="left:9px;top:599.5px" width="9" height="10" viewBox="0 0 9 10"><path d="M.5 .5l8 4.500-8 4.500z" fill="#b4b4b4"/></svg>
<svg class="i" style="left:25px;top:596px" width="16" height="16" viewBox="0 0 16 16" ><rect x=".5" y=".5" width="15" height="14.500" fill="#fff" stroke="#4b5462" stroke-width="1"/><rect x="2" y="2" width="12" height="11.500" fill="#2a6cf0"/><path d="M2 4.500h12M2 6.500h12M2 8.500h12M2 10.500h12M2 12.500h12" stroke="#e8f0ff" stroke-width=".9"/><path d="M3 3.500h1M3 5.500h1M3 7.500h1M3 9.500h1M3 11.500h1" stroke="#fff" stroke-width="1"/></svg>
<span class="t" style="left:45px;top:595px;letter-spacing:-0.34px;">Result</span>
<div class="b panel" style="left:324px;top:28px;width:962px;height:214px;"></div>
<div class="b ttl" style="left:325px;top:29px;width:960px;height:23px;"></div>
<svg class="i" style="left:326px;top:32px" width="16" height="16" viewBox="0 0 16 16" ><rect x=".5" y="1.500" width="14" height="12" rx="1" fill="url(#g6)" stroke="#6d95d6"/><rect x="1" y="2" width="13" height="1.300" fill="#a5c2ee"/><path d="M2.500 12h10" stroke="#5aad46" stroke-width="1.500"/><path d="M4.500 7.500v4.300h6v-4.300l-3-2.800z" fill="#f7f7f7" stroke="#a3a3a3" stroke-width=".6"/><path d="M3.100 8.300l4.400-4.100 4.400 4.100" fill="none" stroke="#c98445" stroke-width="1.700"/><rect x="6.700" y="8.800" width="1.700" height="3" fill="#5f6b80"/></svg>
<span class="t" style="left:347px;top:31px;letter-spacing:-0.45px;">Events</span>
<svg class="i" style="left:1168px;top:32px" width="16" height="16" viewBox="0 0 16 16" ><rect x=".5" y=".5" width="14.500" height="14.500" fill="#fff" stroke="#4f5560"/><rect x="2" y="2" width="11.500" height="11.500" fill="none" stroke="#cfd3da" stroke-width=".7"/><rect x="3" y="3.300" width="2.700" height="1.700" fill="#e03030"/><rect x="6.500" y="3.300" width="5" height="1.700" fill="#3aa04a"/><path d="M3 8h5M3 11h3" stroke="#9aa0aa" stroke-width="1"/><path d="M5.6 15.8l.9-3.200 7.200-7.200 2.300 2.300-7.200 7.200z" fill="#1f6fe0" stroke="#1a4fb0" stroke-width=".5"/><path d="M7.5 13.700000000000001l6.600-6.600" stroke="#bfe0ff" stroke-width=".9"/><path d="M13.7 5.4l1-1a1.300 1.300 0 0 1 2.300 2.300l-1 1z" fill="#e81c1c"/><path d="M5.6 15.8l.9-3.200 2.300 2.300z" fill="#f4c65c" stroke="#a8761a" stroke-width=".5"/><path d="M5.6 15.8l.4-1.300.9.900z" fill="#222"/></svg>
<div class="b sep" style="left:1188px;top:30px;width:1px;height:21px;"></div>
<svg class="i" style="left:1193px;top:32px" width="16" height="16" viewBox="0 0 16 16" ><path d="M.5 .5h8l2 2.500h3v6h-13z" fill="#c2c2c2" stroke="#6a7078"/><path d="M1.500 2.500h7.500M1.500 4.500h7.500M1.500 6.500h4" stroke="#9a9a9a" stroke-width=".8"/><path d="M.5 .5v14" stroke="#6a7078"/><rect x="6" y="2.500" width="8" height="6" fill="#f4f4f4" stroke="#b5b5b5" stroke-width=".7"/><path d="M7.500 4.500h5M7.500 6.500h5" stroke="#c8c8c8" stroke-width=".8"/><path d="M2.800 8.500h12.700l-1.300 6.500h-13.700z" fill="url(#g1)" stroke="#3763ad"/><path d="M3.600 9.500h11" stroke="#c4daf5" stroke-width=".8"/></svg>
<div class="b sep" style="left:1213px;top:30px;width:1px;height:21px;"></div>
<svg class="i" style="left:1218px;top:32px" width="16" height="16" viewBox="0 0 16 16" ><circle cx="8" cy="8" r="6.900" fill="url(#g7)" stroke="#b07a45" stroke-width=".6"/><circle cx="8" cy="8" r="5.700" fill="#fdfdff" stroke="#7d9fe0" stroke-width=".9"/><circle cx="8" cy="8" r="4.300" fill="none" stroke="#d8e2f5" stroke-width=".7"/><path d="M8 4.800v3.400l2.500-1.500" fill="none" stroke="#4a5058" stroke-width=".9"/></svg>
<div class="b sep" style="left:1238px;top:30px;width:1px;height:21px;"></div>
<svg class="i" style="left:1243px;top:32px" width="16" height="16" viewBox="0 0 16 16" ><rect x="0" y="1" width="16" height="14" fill="#000"/><rect x="1" y="2" width="14" height="2" fill="#b23cf5"/><rect x="1" y="5" width="14" height="9" fill="#fff"/></svg>
<svg class="i" style="left:1267.5px;top:34.5px" width="10" height="10" viewBox="0 0 10 10" ><path d="M1.200 1.200l7.500 7.500M8.700 1.200l-7.500 7.500" stroke="#f01010" stroke-width="1.700" stroke-linecap="round"/></svg>
<div class="b inp" style="left:327px;top:53px;width:234px;height:22px;"></div>
<div class="b btn" style="left:565px;top:53px;width:22px;height:22px;"></div>
<svg class="i" style="left:568px;top:56px" width="16" height="16" viewBox="0 0 16 16" ><path d="M9.300 9.300l4.300 4.100" stroke="#7a4e0c" stroke-width="3.400" stroke-linecap="round"/><path d="M9.300 9.300l4.300 4.100" stroke="#f6b820" stroke-width="2" stroke-linecap="round"/><path d="M9.700 9l4.200 4" stroke="#fde9a0" stroke-width=".7" stroke-linecap="round"/><circle cx="5.400" cy="5.400" r="4.800" fill="url(#g11)" stroke="#5d7fb5" stroke-width="1.100"/><circle cx="5.400" cy="5.400" r="4.800" fill="none" stroke="#2a3c5e" stroke-width="1.200" stroke-dasharray="1.400 2.400"/><path d="M1 5.900a4.400 4.400 0 0 0 8.800 0z" fill="#3f86ea" opacity=".6"/><path d="M2.600 3.800a3.300 3.300 0 0 1 5.600 0" fill="none" stroke="#fff" stroke-width="1.200" stroke-linecap="round" opacity=".8"/></svg>
<div class="b btn" style="left:601px;top:54px;width:19px;height:21px;"></div>
<svg class="i" style="left:602px;top:56px" width="16" height="16" viewBox="0 0 16 16" ><path d="M2 8.200v-3.200q0-2 2-2h4v-2l4.200 3.300-4.200 3.300v-2.100h-3.200q-.5 0-.5.500v2.200z" fill="#d4ecfa" stroke="#074a86" stroke-width="1.300" stroke-linejoin="miter"/><path d="M14.200 7v4q0 2-2 2h-4v2l-4.200-3.200 4.200-3.200v2h3.200q.5 0 .5-.500v-3.100z" fill="#a9e6f2" stroke="#07405e" stroke-width="1.300" stroke-linejoin="miter"/></svg>
<div class="b" style="left:634px;top:57px;width:15px;height:15px;border-radius:50%;background:#4a90e2;border:1px solid #4a90e2"></div>
<div class="b" style="left:639px;top:62px;width:5px;height:5px;border-radius:50%;background:#fff"></div>
<span class="t" style="left:653px;top:55px;word-spacing:-0.34px;"><span class="wd" style="width:29.0px;letter-spacing:-0.25px">Show</span> <span class="wd" style="width:32.0px;letter-spacing:-0.00px">actual</span> <span class="wd" style="width:34.0px;letter-spacing:-0.22px">events</span></span>
<div class="b" style="left:763px;top:57px;width:15px;height:15px;border-radius:50%;background:#fff;border:1px solid #8a8a8a"></div>
<span class="t" style="left:782px;top:55px;word-spacing:-0.34px;"><span class="wd" style="width:29.0px;letter-spacing:-0.25px">Show</span> <span class="wd" style="width:12.0px;letter-spacing:-0.01px">all</span> <span class="wd" style="width:34.0px;letter-spacing:-0.22px">events</span></span>
<div class="b" style="left:1030px;top:62px;width:146px;height:4px;background:#2d7fd6;border-radius:2px"></div>
<span class="t c" style="left:1030px;top:59px;width:146px;font-size:6px;color:#cfe2f7;line-height:10px;height:10px">100 %</span>
<span class="t r" style="left:1186px;top:55px;width:98px;letter-spacing:-0.04px;">1 / 1 Record found</span>
<div class="b tbl" style="left:327px;top:79px;width:957px;height:160px;"></div>
<div class="b" style="left:1272px;top:105px;width:11px;height:133px;background:#f5f5f5"></div>
<div class="b" style="left:328px;top:104px;width:955px;height:1px;background:#ececec"></div>
<div class="b" style="left:328px;top:105px;width:944px;height:18px;background:#a0a0ff"></div>
<span class="t c" style="left:328px;top:83px;width:151px;letter-spacing:-1.20px;">EVENT</span>
<div class="b vs" style="left:479px;top:80px;width:1px;height:24px;"></div>
<span class="t" style="left:329px;top:105px;width:148px;word-spacing:-0.34px;"><span class="wd" style="width:59.0px;letter-spacing:-0.04px">Knowledge</span> <span class="wd" style="width:24.0px;letter-spacing:-0.84px">Base</span></span>
<span class="t c" style="left:479px;top:83px;width:125px;letter-spacing:-0.75px;">DEADLINE</span>
<div class="b vs" style="left:604px;top:80px;width:1px;height:24px;"></div>
<span class="t" style="left:481px;top:105px;width:122px;letter-spacing:-0.60px;">2023.12.31</span>
<span class="t c" style="left:604px;top:83px;width:134px;letter-spacing:-0.84px;">START DATE</span>
<div class="b vs" style="left:738px;top:80px;width:1px;height:24px;"></div>
<span class="t" style="left:606px;top:105px;width:131px;letter-spacing:-0.60px;">2023.12.31</span>
<span class="t c" style="left:738px;top:83px;width:125px;letter-spacing:-0.72px;">END DATE</span>
<div class="b vs" style="left:863px;top:80px;width:1px;height:24px;"></div>
<span class="t" style="left:740px;top:105px;width:122px;letter-spacing:-0.60px;">2023.12.31</span>
<span class="t c" style="left:863px;top:83px;width:124px;letter-spacing:-0.73px;">COUNTRY</span>
<div class="b vs" style="left:987px;top:80px;width:1px;height:24px;"></div>
<span class="t" style="left:865px;top:105px;width:121px;letter-spacing:-0.86px;">AUSTRIA</span>
<span class="t c" style="left:987px;top:83px;width:152px;letter-spacing:-1.29px;">ADDRESS</span>
<div class="b vs" style="left:1139px;top:80px;width:1px;height:24px;"></div>
<span class="t" style="left:989px;top:105px;width:149px;word-spacing:-0.34px;"><span class="wd" style="width:59.0px;letter-spacing:-0.04px">Knowledge</span> <span class="wd" style="width:24.0px;letter-spacing:-0.84px">Base</span></span>
<span class="t c" style="left:1139px;top:83px;width:133px;letter-spacing:-1.33px;">TYPE</span>
<div class="b vs" style="left:1272px;top:80px;width:1px;height:24px;"></div>
<span class="t" style="left:1141px;top:105px;width:130px;letter-spacing:0.16px;">Tournament</span>
<svg class="i" style="left:1272px;top:85px" width="12" height="14" viewBox="0 0 12 14" ><rect x=".6" y="1.600" width="9" height="8.500" fill="#fff" stroke="#111" stroke-width="1.200"/><path d="M.6 4.500h9M5.100 1.600v6" stroke="#111" stroke-width="1.100"/><path d="M3.500 8h8.500l-4.250 4.500z" fill="#111" stroke="#fff" stroke-width=".5"/></svg>
<div class="b panel" style="left:324px;top:249px;width:962px;height:784px;"></div>
<div class="b" style="left:348px;top:250px;width:1px;height:782px;background:#b5b5b5"></div>
<div class="b ttl" style="left:349px;top:250px;width:936px;height:23px;"></div>
<svg class="i" style="left:329px;top:253px" width="16" height="16" viewBox="0 0 16 16" ><path d="M1.500 2.500l2-2h5v9h-7z" fill="#fff" stroke="#39414e"/><path d="M1.500 2.500h2v-2" fill="#d8dde6" stroke="#39414e" stroke-width=".7"/><path d="M4.500 3h7.500v8.500h-7.500z" fill="#fff" stroke="#39414e"/><path d="M7.500 5.500h7.500v8.500h-7.500z" fill="#fff" stroke="#39414e"/></svg>
<svg class="i" style="left:350px;top:253px" width="16" height="16" viewBox="0 0 16 16" ><path d="M4.0 2.0h11.5v8.5h-2.500v-1.200h-1.500v1.200h-3.5v-1.200h-1.500v1.200h-2.500z" fill="#f8fafd" stroke="#39414e"/><path d="M3.5 0.5h5.9v1h6.6v1.600h-12.5z" fill="#1a6de6"/><path d="M4.5 1.3h3.9" stroke="#8fbaf8" stroke-width=".7"/><path d="M0.5 6.0h12v9.5h-2.500v-1.200h-1.500v1.200h-4v-1.200h-1.500v1.200h-2.500z" fill="#f8fafd" stroke="#39414e"/><path d="M0 4.5h6.1v1h6.9v1.600h-13z" fill="#1a6de6"/><path d="M1 5.3h4.1" stroke="#8fbaf8" stroke-width=".7"/><path d="M3 9.5h7M3 11.5h7M3 13.3h6" stroke="#aab6ca" stroke-width=".8"/></svg>
<span class="t" style="left:371px;top:252px;word-spacing:-0.34px;"><span class="wd" style="width:61.0px;letter-spacing:0.23px">Competitor</span> <span class="wd" style="width:56.0px;letter-spacing:-0.20px">Categories</span></span>
<svg class="i" style="left:1030px;top:253px" width="16" height="16" viewBox="0 0 16 16" ><path d="M4.0 2.0h11.5v8.5h-2.500v-1.200h-1.500v1.200h-3.5v-1.200h-1.500v1.200h-2.500z" fill="#f8fafd" stroke="#39414e"/><path d="M3.5 0.5h5.9v1h6.6v1.600h-12.5z" fill="#1a6de6"/><path d="M4.5 1.3h3.9" stroke="#8fbaf8" stroke-width=".7"/><path d="M0.5 6.0h12v9.5h-2.500v-1.200h-1.500v1.200h-4v-1.200h-1.500v1.200h-2.500z" fill="#f8fafd" stroke="#39414e"/><path d="M0 4.5h6.1v1h6.9v1.600h-13z" fill="#1a6de6"/><path d="M1 5.3h4.1" stroke="#8fbaf8" stroke-width=".7"/><path d="M3 9.5h7M3 11.5h7M3 13.3h6" stroke="#aab6ca" stroke-width=".8"/></svg>
<div class="b sep" style="left:1050px;top:251px;width:1px;height:21px;"></div>
<svg class="i" style="left:1055px;top:253px" width="16" height="16" viewBox="0 0 16 16" ><rect x=".5" y="2.500" width="11" height="11.500" fill="url(#g9)" stroke="#956a08" stroke-width="1"/><path d="M3.300 3.500v-1.700h1.500a1.400 1.400 0 0 1 2.400 0h1.500v1.700z" fill="#dfe4ee" stroke="#4a5470" stroke-width=".9"/><path d="M6.800 5.500h5.700l3 3v7h-8.700z" fill="url(#g8)" stroke="#3c4350" stroke-width="1"/><path d="M12.500 5.500v3h3" fill="#f4f4fb" stroke="#8a86c0" stroke-width=".8"/></svg>
<div class="b sep" style="left:1075px;top:251px;width:1px;height:21px;"></div>
<svg class="i" style="left:1079px;top:253px" width="16" height="16" viewBox="0 0 16 16" ><rect x=".5" y="1.5" width="14" height="12" rx=".8" fill="#fff" stroke="#5d8bd2"/><rect x="1" y="2.0" width="13" height="1.800" fill="#8fb8f0"/><path d="M2.500 6.500h4.500M2.500 9.500h4.500" stroke="#111" stroke-width="1"/><path d="M8 7.500h5v1h-5z" fill="#111"/><path d="M7.500 6.500h5" stroke="#c9d6ea" stroke-width="1"/></svg>
<svg class="i" style="left:1102px;top:253px" width="16" height="16" viewBox="0 0 16 16" ><path d="M5.500 3.500h9.500M5.500 8.500h9.500M5.500 13.500h9.500" stroke="#1a1a1a" stroke-width="1"/><path d="M1.800 2.200l1-.7v3M1.300 4.700h2.700M1.500 7.300c.8-.9 2.200-.6 2 .4-.1.700-1.800 1.500-2.100 2.300h2.500M1.500 12.200c.9-.7 2.300-.4 2.100.4-.1.500-.8.700-1.400.7.800 0 1.600.3 1.500 1-.1.900-1.600 1-2.300.4" fill="none" stroke="#3f7de0" stroke-width=".9"/></svg>
<div class="b sep" style="left:1121px;top:251px;width:1px;height:21px;"></div>
<svg class="i" style="left:1127px;top:253px" width="16" height="16" viewBox="0 0 16 16" ><rect x=".5" y="1.5" width="14" height="11.5" rx=".8" fill="#fff" stroke="#5d8bd2"/><rect x="1" y="2.0" width="13" height="1.800" fill="#8fb8f0"/><path d="M2.500 6h5M2.500 10h3" stroke="#111" stroke-width="1.300"/><path d="M8 6h4.500" stroke="#c9d6ea"/><path d="M4.3 15.6l1-3.300 7.600-6.300c1.300-.9 3 1 2 2.300l-7.300 6.500z" fill="#f8c74a" stroke="#a8721c" stroke-width=".8" stroke-linejoin="round"/><path d="M6.1 13.399999999999999l7.500-6.400" stroke="#fde9a8" stroke-width=".9"/><path d="M4.3 15.6l1-3.300 2.300 2.500z" fill="#f0d2a2" stroke="#a8721c" stroke-width=".5"/><path d="M4.3 15.6l.4-1.400 1 1z" fill="#2a2a2a"/></svg>
<svg class="i" style="left:1149px;top:253px" width="16" height="16" viewBox="0 0 16 16" ><rect x=".5" y="2" width="14" height="12" rx=".8" fill="#fff" stroke="#5d8bd2"/><rect x="1" y="2.5" width="13" height="1.800" fill="#8fb8f0"/><path d="M7.750 4.500v9.500" stroke="#5d8bd2"/><path d="M2.500 7h3.500M9.500 7h3.500M2.500 10.500h3.500" stroke="#333" stroke-width="1.100"/><path d="M9.500 10.500h3.500" stroke="#111" stroke-width="1.800"/></svg>
<svg class="i" style="left:1171px;top:253px" width="16" height="16" viewBox="0 0 16 16" ><rect x="1.500" y="1" width="12.500" height="6.500" rx=".6" fill="#fff" stroke="#5d8bd2"/><rect x="2" y="1.500" width="11.500" height="1.600" fill="#8fb8f0"/><rect x="1.500" y="8.500" width="12.500" height="6.500" rx=".6" fill="#fff" stroke="#5d8bd2"/><rect x="2" y="9" width="11.500" height="1.300" fill="#8fb8f0"/><path d="M3.500 5h8.500M3.500 12.300h8.500" stroke="#222" stroke-width="1.800"/></svg>
<svg class="i" style="left:1193px;top:253px" width="16" height="16" viewBox="0 0 16 16" ><rect x=".5" y="1.5" width="14" height="11.5" rx=".8" fill="#fff" stroke="#b73cc4"/><rect x="1" y="2.0" width="13" height="1.800" fill="#d548e0"/><path d="M2.500 6h5M2.500 10h3" stroke="#111" stroke-width="1.300"/><path d="M8 6h4.500" stroke="#c9d6ea"/><path d="M4.3 15.6l1-3.300 7.600-6.300c1.300-.9 3 1 2 2.300l-7.300 6.500z" fill="#f8c74a" stroke="#a8721c" stroke-width=".8" stroke-linejoin="round"/><path d="M6.1 13.399999999999999l7.500-6.400" stroke="#fde9a8" stroke-width=".9"/><path d="M4.3 15.6l1-3.300 2.300 2.500z" fill="#f0d2a2" stroke="#a8721c" stroke-width=".5"/><path d="M4.3 15.6l.4-1.400 1 1z" fill="#2a2a2a"/></svg>
<div class="b sep" style="left:1213px;top:251px;width:1px;height:21px;"></div>
<svg class="i" style="left:1218px;top:253px" width="16" height="16" viewBox="0 0 16 16" ><rect x=".5" y=".5" width="15" height="14.500" fill="#fff" stroke="#4b5462" stroke-width="1"/><rect x="2" y="2" width="12" height="11.500" fill="#2a6cf0"/><path d="M2 4.500h12M2 6.500h12M2 8.500h12M2 10.500h12M2 12.500h12" stroke="#e8f0ff" stroke-width=".9"/><path d="M3 3.500h1M3 5.500h1M3 7.500h1M3 9.500h1M3 11.500h1" stroke="#fff" stroke-width="1"/></svg>
<div class="b sep" style="left:1238px;top:251px;width:1px;height:21px;"></div>
<svg class="i" style="left:1243px;top:253px" width="16" height="16" viewBox="0 0 16 16" ><rect x="0" y="1" width="16" height="14" fill="#000"/><rect x="1" y="2" width="14" height="2" fill="#b23cf5"/><rect x="1" y="5" width="14" height="9" fill="#fff"/></svg>
<svg class="i" style="left:1267.5px;top:255.5px" width="10" height="10" viewBox="0 0 10 10" ><path d="M1.200 1.200l7.500 7.500M8.700 1.200l-7.500 7.500" stroke="#f01010" stroke-width="1.700" stroke-linecap="round"/></svg>
<div class="b inp" style="left:351px;top:274px;width:234px;height:22px;"></div>
<div class="b btn" style="left:589px;top:274px;width:22px;height:22px;"></div>
<svg class="i" style="left:592px;top:277px" width="16" height="16" viewBox="0 0 16 16" ><path d="M9.300 9.300l4.300 4.100" stroke="#7a4e0c" stroke-width="3.400" stroke-linecap="round"/><path d="M9.300 9.300l4.300 4.100" stroke="#f6b820" stroke-width="2" stroke-linecap="round"/><path d="M9.700 9l4.200 4" stroke="#fde9a0" stroke-width=".7" stroke-linecap="round"/><circle cx="5.400" cy="5.400" r="4.800" fill="url(#g11)" stroke="#5d7fb5" stroke-width="1.100"/><circle cx="5.400" cy="5.400" r="4.800" fill="none" stroke="#2a3c5e" stroke-width="1.200" stroke-dasharray="1.400 2.400"/><path d="M1 5.900a4.400 4.400 0 0 0 8.800 0z" fill="#3f86ea" opacity=".6"/><path d="M2.600 3.800a3.300 3.300 0 0 1 5.600 0" fill="none" stroke="#fff" stroke-width="1.200" stroke-linecap="round" opacity=".8"/></svg>
<div class="b btn" style="left:625px;top:275px;width:19px;height:21px;"></div>
<svg class="i" style="left:626px;top:277px" width="16" height="16" viewBox="0 0 16 16" ><path d="M2 8.200v-3.200q0-2 2-2h4v-2l4.200 3.300-4.200 3.300v-2.100h-3.200q-.5 0-.5.500v2.200z" fill="#d4ecfa" stroke="#074a86" stroke-width="1.300" stroke-linejoin="miter"/><path d="M14.200 7v4q0 2-2 2h-4v2l-4.200-3.200 4.200-3.200v2h3.200q.5 0 .5-.500v-3.100z" fill="#a9e6f2" stroke="#07405e" stroke-width="1.300" stroke-linejoin="miter"/></svg>
<div class="b btn" style="left:658px;top:274px;width:22px;height:22px;"></div>
<svg class="i" style="left:661px;top:277px" width="16" height="16" viewBox="0 0 16 16" ><path d="M1 1h14v14h-14z" fill="#4c6cae" stroke="#3a58a2" stroke-width="1"/><path d="M1 14.700h14" stroke="#151a4a" stroke-width="1.200"/><rect x="3" y="1.500" width="10" height="6.500" fill="#fdfdfd"/><rect x="3" y="1.500" width="10" height="1.300" fill="#d8506a"/><path d="M4 5h8" stroke="#dfe4e0" stroke-width="1.200"/><rect x="4.500" y="10" width="7.500" height="4.200" fill="#8d8f96"/><rect x="5.500" y="10.500" width="1.500" height="3.500" fill="#3a58a2"/><rect x="8.500" y="10.500" width="2.500" height="2" fill="#b9bbc0"/></svg>
<div class="b" style="left:1013px;top:283px;width:146px;height:4px;background:#2d7fd6;border-radius:2px"></div>
<span class="t c" style="left:1013px;top:280px;width:146px;font-size:6px;color:#cfe2f7;line-height:10px;height:10px">100 %</span>
<span class="t r" style="left:1160px;top:276px;width:124px;letter-spacing:-0.06px;">11 / 11 Records found</span>
<div class="b tbl" style="left:351px;top:300px;width:933px;height:706px;"></div>
<div class="b" style="left:1272px;top:326px;width:11px;height:679px;background:#f5f5f5"></div>
<div class="b" style="left:352px;top:325px;width:931px;height:1px;background:#ececec"></div>
<span class="t c" style="left:352px;top:304px;width:106px;letter-spacing:-0.90px;">CATEGORY</span>
<div class="b vs" style="left:458px;top:301px;width:1px;height:24px;"></div>
<span class="t c" style="left:458px;top:304px;width:33px;letter-spacing:-0.86px;">TE...</span>
<div class="b vs" style="left:491px;top:301px;width:1px;height:24px;"></div>
<span class="t c" style="left:491px;top:304px;width:26px;letter-spacing:-1.67px;">SEX</span>
<div class="b vs" style="left:517px;top:301px;width:1px;height:24px;"></div>
<span class="t" style="left:522px;top:304px;letter-spacing:-0.75px;">E...</span>
<svg class="i" style="left:541px;top:311px" width="9" height="5" viewBox="0 0 9 5"><path d="M0 0h9l-4.500 5z" fill="#b0b0b0"/></svg>
<div class="b vs" style="left:557px;top:301px;width:1px;height:24px;"></div>
<span class="t c" style="left:557px;top:304px;width:86px;letter-spacing:-0.51px;">DRAW MODE</span>
<div class="b vs" style="left:643px;top:301px;width:1px;height:24px;"></div>
<span class="t c" style="left:643px;top:304px;width:36px;letter-spacing:-0.46px;">PO...</span>
<div class="b vs" style="left:679px;top:301px;width:1px;height:24px;"></div>
<span class="t c" style="left:679px;top:304px;width:55px;letter-spacing:-0.10px;">#MATC...</span>
<div class="b vs" style="left:734px;top:301px;width:1px;height:24px;"></div>
<span class="t c" style="left:734px;top:304px;width:54px;letter-spacing:-0.33px;">Status</span>
<div class="b vs" style="left:788px;top:301px;width:1px;height:24px;"></div>
<span class="t c" style="left:788px;top:304px;width:48px;letter-spacing:-0.58px;">AGE F...</span>
<div class="b vs" style="left:836px;top:301px;width:1px;height:24px;"></div>
<span class="t c" style="left:836px;top:304px;width:58px;letter-spacing:-0.65px;">AGE TO...</span>
<div class="b vs" style="left:894px;top:301px;width:1px;height:24px;"></div>
<span class="t c" style="left:894px;top:304px;width:61px;letter-spacing:-0.65px;">ENTRY F...</span>
<div class="b vs" style="left:955px;top:301px;width:1px;height:24px;"></div>
<span class="t c" style="left:955px;top:304px;width:83px;letter-spacing:-0.32px;">DRAW MOD...</span>
<div class="b vs" style="left:1038px;top:301px;width:1px;height:24px;"></div>
<span class="t c" style="left:1038px;top:304px;width:55px;letter-spacing:-0.28px;">LIMIT (...</span>
<div class="b vs" style="left:1093px;top:301px;width:1px;height:24px;"></div>
<span class="t c" style="left:1093px;top:304px;width:72px;letter-spacing:-0.29px;">LIMIT (CA...</span>
<div class="b vs" style="left:1165px;top:301px;width:1px;height:24px;"></div>
<span class="t c" style="left:1165px;top:304px;width:56px;letter-spacing:-0.33px;">Entries ...</span>
<div class="b vs" style="left:1221px;top:301px;width:1px;height:24px;"></div>
<span class="t c" style="left:1221px;top:304px;width:51px;letter-spacing:-0.22px;">Short ...</span>
<div class="b vs" style="left:1272px;top:301px;width:1px;height:24px;"></div>
<svg class="i" style="left:1272px;top:306px" width="12" height="14" viewBox="0 0 12 14" ><rect x=".6" y="1.600" width="9" height="8.500" fill="#fff" stroke="#111" stroke-width="1.200"/><path d="M.6 4.500h9M5.100 1.600v6" stroke="#111" stroke-width="1.100"/><path d="M3.500 8h8.500l-4.250 4.500z" fill="#111" stroke="#fff" stroke-width=".5"/></svg>
<div class="b" style="left:1171px;top:326px;width:19px;height:18px;background:#ffff00"></div>
<span class="t c" style="left:1171px;top:326px;width:19px;letter-spacing:-1.00px;">P</span>
<div class="b" style="left:1192px;top:326px;width:23px;height:18px;background:#0000ff"></div>
<span class="t c" style="left:1192px;top:326px;width:23px;letter-spacing:-0.33px;color:#06063a">W</span>
<span class="t" style="left:355px;top:326px;word-spacing:-0.34px;"><span class="wd" style="width:48.0px;letter-spacing:-0.09px">Category</span> <span class="wd" style="width:6.0px;text-align:center">1</span></span>
<span class="t r" style="left:517px;top:326px;width:37.5px;letter-spacing:-0.67px;">21</span>
<span class="t" style="left:561px;top:326px;word-spacing:-0.34px;"><span class="wd" style="width:60.0px;letter-spacing:0.12px">Elimination</span> <span class="wd" style="width:13.0px;letter-spacing:-0.25px">(...</span></span>
<span class="t" style="left:647px;top:326px;letter-spacing:-0.67px;">2</span>
<span class="t" style="left:683px;top:326px;letter-spacing:-0.67px;">26</span>
<span class="t" style="left:738px;top:326px;letter-spacing:-0.13px;">Partici...</span>
<span class="t r" style="left:788px;top:326px;width:46px;letter-spacing:-0.67px;">18</span>
<span class="t r" style="left:836px;top:326px;width:56px;letter-spacing:-0.67px;">99</span>
<span class="t r" style="left:894px;top:326px;width:61px;letter-spacing:-0.59px;">20.0</span>
<span class="t" style="left:959px;top:326px;letter-spacing:1.00px;">-</span>
<span class="t r" style="left:1038px;top:326px;width:53px;letter-spacing:-0.67px;">0</span>
<span class="t r" style="left:1093px;top:326px;width:70px;letter-spacing:-0.67px;">0</span>
<div class="b" style="left:1171px;top:344px;width:19px;height:18px;background:#ffff00"></div>
<span class="t c" style="left:1171px;top:344px;width:19px;letter-spacing:-1.00px;">P</span>
<div class="b" style="left:1192px;top:344px;width:19px;height:18px;background:#ff8000"></div>
<span class="t c" style="left:1192px;top:344px;width:19px;letter-spacing:-1.67px;">R</span>
<span class="t" style="left:355px;top:344px;word-spacing:-0.34px;"><span class="wd" style="width:48.0px;letter-spacing:-0.09px">Category</span> <span class="wd" style="width:6.0px;text-align:center">2</span></span>
<span class="t r" style="left:517px;top:344px;width:37.5px;letter-spacing:-0.67px;">8</span>
<span class="t" style="left:561px;top:344px;word-spacing:-0.34px;"><span class="wd" style="width:60.0px;letter-spacing:0.12px">Elimination</span> <span class="wd" style="width:13.0px;letter-spacing:-0.25px">(...</span></span>
<span class="t" style="left:647px;top:344px;letter-spacing:0.16px;">auto</span>
<span class="t" style="left:683px;top:344px;letter-spacing:-0.67px;">9</span>
<span class="t" style="left:738px;top:344px;letter-spacing:-0.13px;">Partici...</span>
<span class="t r" style="left:788px;top:344px;width:46px;letter-spacing:-0.67px;">18</span>
<span class="t r" style="left:836px;top:344px;width:56px;letter-spacing:-0.67px;">99</span>
<span class="t r" style="left:894px;top:344px;width:61px;letter-spacing:-0.59px;">20.0</span>
<span class="t" style="left:959px;top:344px;letter-spacing:1.00px;">-</span>
<span class="t r" style="left:1038px;top:344px;width:53px;letter-spacing:-0.67px;">0</span>
<span class="t r" style="left:1093px;top:344px;width:70px;letter-spacing:-0.67px;">0</span>
<div class="b" style="left:352px;top:362px;width:920px;height:18px;background:#d1d1d1"></div>
<div class="b" style="left:1171px;top:362px;width:19px;height:18px;background:#ffff00"></div>
<span class="t c" style="left:1171px;top:362px;width:19px;letter-spacing:-1.00px;">P</span>
<span class="t" style="left:355px;top:362px;word-spacing:-0.34px;"><span class="wd" style="width:48.0px;letter-spacing:-0.09px">Category</span> <span class="wd" style="width:6.0px;text-align:center">6</span> <span class="wd" style="width:5.0px;text-align:center">-</span> <span class="wd" style="width:30.0px;letter-spacing:0.00px">fem...</span></span>
<span class="t r" style="left:517px;top:362px;width:37.5px;letter-spacing:-0.67px;">3</span>
<span class="t" style="left:561px;top:362px;word-spacing:-0.34px;"><span class="wd" style="width:35.0px;letter-spacing:-0.07px">Round</span> <span class="wd" style="width:40.0px;letter-spacing:-0.17px">Robin...</span></span>
<span class="t" style="left:647px;top:362px;letter-spacing:0.16px;">auto</span>
<span class="t" style="left:683px;top:362px;letter-spacing:-0.67px;">3</span>
<span class="t" style="left:738px;top:362px;letter-spacing:-0.13px;">Partici...</span>
<span class="t r" style="left:788px;top:362px;width:46px;letter-spacing:-0.67px;">16</span>
<span class="t r" style="left:836px;top:362px;width:56px;letter-spacing:-0.67px;">99</span>
<span class="t r" style="left:894px;top:362px;width:61px;letter-spacing:-0.59px;">20.0</span>
<span class="t" style="left:959px;top:362px;letter-spacing:1.00px;">-</span>
<span class="t r" style="left:1038px;top:362px;width:53px;letter-spacing:-0.67px;">0</span>
<span class="t r" style="left:1093px;top:362px;width:70px;letter-spacing:-0.67px;">0</span>
<div class="b" style="left:1171px;top:380px;width:19px;height:18px;background:#ffff00"></div>
<span class="t c" style="left:1171px;top:380px;width:19px;letter-spacing:-1.00px;">P</span>
<span class="t" style="left:355px;top:380px;word-spacing:-0.34px;"><span class="wd" style="width:48.0px;letter-spacing:-0.09px">Category</span> <span class="wd" style="width:6.0px;text-align:center">6</span> <span class="wd" style="width:5.0px;text-align:center">-</span> <span class="wd" style="width:26.0px;letter-spacing:-0.00px">male</span></span>
<span class="t r" style="left:517px;top:380px;width:37.5px;letter-spacing:-0.67px;">2</span>
<span class="t" style="left:561px;top:380px;word-spacing:-0.34px;"><span class="wd" style="width:60.0px;letter-spacing:0.12px">Elimination</span> <span class="wd" style="width:13.0px;letter-spacing:-0.25px">(...</span></span>
<span class="t" style="left:647px;top:380px;letter-spacing:0.16px;">auto</span>
<span class="t" style="left:683px;top:380px;letter-spacing:-0.67px;">1</span>
<span class="t" style="left:738px;top:380px;letter-spacing:-0.13px;">Partici...</span>
<span class="t r" style="left:788px;top:380px;width:46px;letter-spacing:-0.67px;">16</span>
<span class="t r" style="left:836px;top:380px;width:56px;letter-spacing:-0.67px;">99</span>
<span class="t r" style="left:894px;top:380px;width:61px;letter-spacing:-0.59px;">20.0</span>
<span class="t" style="left:959px;top:380px;letter-spacing:1.00px;">-</span>
<span class="t r" style="left:1038px;top:380px;width:53px;letter-spacing:-0.67px;">0</span>
<span class="t r" style="left:1093px;top:380px;width:70px;letter-spacing:-0.67px;">0</span>
<div class="b" style="left:1171px;top:398px;width:19px;height:18px;background:#ffff00"></div>
<span class="t c" style="left:1171px;top:398px;width:19px;letter-spacing:-1.00px;">P</span>
<span class="t" style="left:355px;top:398px;word-spacing:-0.34px;"><span class="wd" style="width:48.0px;letter-spacing:-0.09px">Category</span> <span class="wd" style="width:6.0px;text-align:center">2</span> <span class="wd" style="width:41.0px;letter-spacing:-0.34px">+1995...</span></span>
<span class="t r" style="left:517px;top:398px;width:37.5px;letter-spacing:-0.67px;">1</span>
<span class="t" style="left:561px;top:398px;word-spacing:-0.34px;"><span class="wd" style="width:60.0px;letter-spacing:0.12px">Elimination</span> <span class="wd" style="width:13.0px;letter-spacing:-0.25px">(...</span></span>
<span class="t" style="left:647px;top:398px;letter-spacing:0.16px;">auto</span>
<span class="t" style="left:683px;top:398px;letter-spacing:-0.67px;">0</span>
<span class="t" style="left:738px;top:398px;letter-spacing:-0.13px;">Partici...</span>
<span class="t r" style="left:788px;top:398px;width:46px;letter-spacing:-0.67px;">18</span>
<span class="t r" style="left:836px;top:398px;width:56px;letter-spacing:-0.67px;">99</span>
<span class="t r" style="left:894px;top:398px;width:61px;letter-spacing:-0.59px;">20.0</span>
<span class="t" style="left:959px;top:398px;letter-spacing:1.00px;">-</span>
<span class="t r" style="left:1038px;top:398px;width:53px;letter-spacing:-0.67px;">0</span>
<span class="t r" style="left:1093px;top:398px;width:70px;letter-spacing:-0.67px;">0</span>
<div class="b" style="left:1171px;top:416px;width:19px;height:18px;background:#ffff00"></div>
<span class="t c" style="left:1171px;top:416px;width:19px;letter-spacing:-1.00px;">P</span>
<span class="t" style="left:355px;top:416px;word-spacing:-0.34px;"><span class="wd" style="width:48.0px;letter-spacing:-0.09px">Category</span> <span class="wd" style="width:6.0px;text-align:center">2</span> <span class="wd" style="width:38.0px;letter-spacing:-0.33px">-1995...</span></span>
<span class="t r" style="left:517px;top:416px;width:37.5px;letter-spacing:-0.67px;">1</span>
<span class="t" style="left:561px;top:416px;word-spacing:-0.34px;"><span class="wd" style="width:60.0px;letter-spacing:0.12px">Elimination</span> <span class="wd" style="width:13.0px;letter-spacing:-0.25px">(...</span></span>
<span class="t" style="left:647px;top:416px;letter-spacing:0.16px;">auto</span>
<span class="t" style="left:683px;top:416px;letter-spacing:-0.67px;">0</span>
<span class="t" style="left:738px;top:416px;letter-spacing:-0.13px;">Partici...</span>
<span class="t r" style="left:788px;top:416px;width:46px;letter-spacing:-0.67px;">18</span>
<span class="t r" style="left:836px;top:416px;width:56px;letter-spacing:-0.67px;">99</span>
<span class="t r" style="left:894px;top:416px;width:61px;letter-spacing:-0.59px;">20.0</span>
<span class="t" style="left:959px;top:416px;letter-spacing:1.00px;">-</span>
<span class="t r" style="left:1038px;top:416px;width:53px;letter-spacing:-0.67px;">0</span>
<span class="t r" style="left:1093px;top:416px;width:70px;letter-spacing:-0.67px;">0</span>
<div class="b" style="left:1171px;top:434px;width:19px;height:18px;background:#ffff00"></div>
<span class="t c" style="left:1171px;top:434px;width:19px;letter-spacing:-1.00px;">P</span>
<span class="t" style="left:355px;top:434px;word-spacing:-0.34px;"><span class="wd" style="width:29.0px;letter-spacing:-0.09px">Team</span> <span class="wd" style="width:48.0px;letter-spacing:-0.09px">Category</span></span>
<span class="t" style="left:462px;top:434px;letter-spacing:0.67px;">t</span>
<span class="t r" style="left:517px;top:434px;width:37.5px;letter-spacing:-0.67px;">1</span>
<span class="t" style="left:561px;top:434px;word-spacing:-0.34px;"><span class="wd" style="width:60.0px;letter-spacing:0.12px">Elimination</span> <span class="wd" style="width:13.0px;letter-spacing:-0.25px">(...</span></span>
<span class="t" style="left:647px;top:434px;letter-spacing:0.16px;">auto</span>
<span class="t" style="left:683px;top:434px;letter-spacing:-0.67px;">0</span>
<span class="t" style="left:738px;top:434px;letter-spacing:-0.13px;">Partici...</span>
<span class="t r" style="left:788px;top:434px;width:46px;letter-spacing:-0.67px;">18</span>
<span class="t r" style="left:836px;top:434px;width:56px;letter-spacing:-0.67px;">99</span>
<span class="t r" style="left:894px;top:434px;width:61px;letter-spacing:-0.59px;">30.0</span>
<span class="t" style="left:959px;top:434px;letter-spacing:1.00px;">-</span>
<span class="t r" style="left:1038px;top:434px;width:53px;letter-spacing:-0.67px;">0</span>
<span class="t r" style="left:1093px;top:434px;width:70px;letter-spacing:-0.67px;">0</span>
<span class="t" style="left:355px;top:452px;word-spacing:-0.34px;"><span class="wd" style="width:48.0px;letter-spacing:-0.09px">Category</span> <span class="wd" style="width:6.0px;text-align:center">3</span> <span class="wd" style="width:5.0px;text-align:center">-</span> <span class="wd" style="width:30.0px;letter-spacing:0.00px">fem...</span></span>
<span class="t" style="left:494px;top:452px;letter-spacing:0.67px;">f</span>
<span class="t r" style="left:517px;top:452px;width:37.5px;letter-spacing:-0.67px;">0</span>
<span class="t" style="left:561px;top:452px;word-spacing:-0.34px;"><span class="wd" style="width:60.0px;letter-spacing:0.12px">Elimination</span> <span class="wd" style="width:13.0px;letter-spacing:-0.25px">(...</span></span>
<span class="t" style="left:647px;top:452px;letter-spacing:0.16px;">auto</span>
<span class="t" style="left:683px;top:452px;letter-spacing:-0.67px;">0</span>
<span class="t" style="left:738px;top:452px;letter-spacing:-0.13px;">Partici...</span>
<span class="t r" style="left:788px;top:452px;width:46px;letter-spacing:-0.67px;">18</span>
<span class="t r" style="left:836px;top:452px;width:56px;letter-spacing:-0.67px;">99</span>
<span class="t r" style="left:894px;top:452px;width:61px;letter-spacing:-0.59px;">20.0</span>
<span class="t" style="left:959px;top:452px;letter-spacing:1.00px;">-</span>
<span class="t r" style="left:1038px;top:452px;width:53px;letter-spacing:-0.67px;">0</span>
<span class="t r" style="left:1093px;top:452px;width:70px;letter-spacing:-0.67px;">0</span>
<span class="t" style="left:355px;top:470px;word-spacing:-0.34px;"><span class="wd" style="width:48.0px;letter-spacing:-0.09px">Category</span> <span class="wd" style="width:6.0px;text-align:center">4</span> <span class="wd" style="width:5.0px;text-align:center">-</span> <span class="wd" style="width:26.0px;letter-spacing:-0.00px">male</span></span>
<span class="t" style="left:494px;top:470px;letter-spacing:1.00px;">m</span>
<span class="t r" style="left:517px;top:470px;width:37.5px;letter-spacing:-0.67px;">0</span>
<span class="t" style="left:561px;top:470px;word-spacing:-0.34px;"><span class="wd" style="width:60.0px;letter-spacing:0.12px">Elimination</span> <span class="wd" style="width:13.0px;letter-spacing:-0.25px">(...</span></span>
<span class="t" style="left:647px;top:470px;letter-spacing:0.16px;">auto</span>
<span class="t" style="left:683px;top:470px;letter-spacing:-0.67px;">0</span>
<span class="t" style="left:738px;top:470px;letter-spacing:-0.13px;">Partici...</span>
<span class="t r" style="left:788px;top:470px;width:46px;letter-spacing:-0.67px;">18</span>
<span class="t r" style="left:836px;top:470px;width:56px;letter-spacing:-0.67px;">99</span>
<span class="t r" style="left:894px;top:470px;width:61px;letter-spacing:-0.59px;">20.0</span>
<span class="t" style="left:959px;top:470px;letter-spacing:1.00px;">-</span>
<span class="t r" style="left:1038px;top:470px;width:53px;letter-spacing:-0.67px;">0</span>
<span class="t r" style="left:1093px;top:470px;width:70px;letter-spacing:-0.67px;">0</span>
<span class="t" style="left:355px;top:488px;word-spacing:-0.34px;"><span class="wd" style="width:48.0px;letter-spacing:-0.09px">Category</span> <span class="wd" style="width:6.0px;text-align:center">5</span></span>
<span class="t" style="left:494px;top:488px;letter-spacing:1.00px;">m</span>
<span class="t r" style="left:517px;top:488px;width:37.5px;letter-spacing:-0.67px;">0</span>
<span class="t" style="left:561px;top:488px;word-spacing:-0.34px;"><span class="wd" style="width:60.0px;letter-spacing:0.12px">Elimination</span> <span class="wd" style="width:13.0px;letter-spacing:-0.25px">(...</span></span>
<span class="t" style="left:647px;top:488px;letter-spacing:0.16px;">auto</span>
<span class="t" style="left:683px;top:488px;letter-spacing:-0.67px;">0</span>
<span class="t" style="left:738px;top:488px;letter-spacing:-0.13px;">Partici...</span>
<span class="t r" style="left:788px;top:488px;width:46px;letter-spacing:-0.67px;">16</span>
<span class="t r" style="left:836px;top:488px;width:56px;letter-spacing:-0.67px;">99</span>
<span class="t r" style="left:894px;top:488px;width:61px;letter-spacing:-0.59px;">20.0</span>
<span class="t" style="left:959px;top:488px;letter-spacing:1.00px;">-</span>
<span class="t r" style="left:1038px;top:488px;width:53px;letter-spacing:-0.67px;">0</span>
<span class="t r" style="left:1093px;top:488px;width:70px;letter-spacing:-0.67px;">0</span>
<span class="t" style="left:355px;top:506px;word-spacing:-0.34px;"><span class="wd" style="width:48.0px;letter-spacing:-0.09px">Category</span> <span class="wd" style="width:6.0px;text-align:center">6</span></span>
<span class="t r" style="left:517px;top:506px;width:37.5px;letter-spacing:-0.67px;">0</span>
<span class="t" style="left:561px;top:506px;word-spacing:-0.34px;"><span class="wd" style="width:60.0px;letter-spacing:0.12px">Elimination</span> <span class="wd" style="width:13.0px;letter-spacing:-0.25px">(...</span></span>
<span class="t" style="left:647px;top:506px;letter-spacing:0.16px;">auto</span>
<span class="t" style="left:683px;top:506px;letter-spacing:-0.67px;">0</span>
<span class="t" style="left:738px;top:506px;letter-spacing:-0.13px;">Partici...</span>
<span class="t r" style="left:788px;top:506px;width:46px;letter-spacing:-0.67px;">16</span>
<span class="t r" style="left:836px;top:506px;width:56px;letter-spacing:-0.67px;">99</span>
<span class="t r" style="left:894px;top:506px;width:61px;letter-spacing:-0.59px;">20.0</span>
<span class="t" style="left:959px;top:506px;letter-spacing:1.00px;">-</span>
<span class="t r" style="left:1038px;top:506px;width:53px;letter-spacing:-0.67px;">0</span>
<span class="t r" style="left:1093px;top:506px;width:70px;letter-spacing:-0.67px;">0</span>
<svg class="i" style="left:329px;top:1011px" width="16" height="16" viewBox="0 0 16 16" ><rect x="0" y="1" width="16" height="14" fill="#000"/><rect x="1" y="2" width="14" height="2" fill="#b23cf5"/><rect x="1" y="5" width="14" height="9" fill="#fff"/></svg>
<div class="b" style="left:350px;top:1008px;width:151px;height:24px;background:#c9c9c9"></div>
<svg class="i" style="left:353px;top:1012px" width="16" height="16" viewBox="0 0 16 16" ><path d="M4.0 2.0h11.5v8.5h-2.500v-1.200h-1.500v1.200h-3.5v-1.200h-1.500v1.200h-2.500z" fill="#f8fafd" stroke="#39414e"/><path d="M3.5 0.5h5.9v1h6.6v1.600h-12.5z" fill="#1a6de6"/><path d="M4.5 1.3h3.9" stroke="#8fbaf8" stroke-width=".7"/><path d="M0.5 6.0h12v9.5h-2.500v-1.200h-1.500v1.200h-4v-1.200h-1.500v1.200h-2.500z" fill="#f8fafd" stroke="#39414e"/><path d="M0 4.5h6.1v1h6.9v1.600h-13z" fill="#1a6de6"/><path d="M1 5.3h4.1" stroke="#8fbaf8" stroke-width=".7"/><path d="M3 9.5h7M3 11.5h7M3 13.3h6" stroke="#aab6ca" stroke-width=".8"/></svg>
<span class="t" style="left:376px;top:1011px;word-spacing:-0.34px;"><span class="wd" style="width:61.0px;letter-spacing:0.23px">Competitor</span> <span class="wd" style="width:56.0px;letter-spacing:-0.20px">Categories</span></span>
<svg class="i" style="left:507px;top:1012px" width="16" height="16" viewBox="0 0 16 16" ><path d="M4.0 2.0h11.5v8.5h-2.500v-1.200h-1.500v1.200h-3.5v-1.200h-1.500v1.200h-2.500z" fill="#f8fafd" stroke="#39414e"/><path d="M3.5 0.5h5.9v1h6.6v1.600h-12.5z" fill="#1a6de6"/><path d="M4.5 1.3h3.9" stroke="#8fbaf8" stroke-width=".7"/><path d="M0.5 6.0h12v9.5h-2.500v-1.200h-1.500v1.200h-4v-1.200h-1.500v1.200h-2.500z" fill="#f8fafd" stroke="#39414e"/><path d="M0 4.5h6.1v1h6.9v1.600h-13z" fill="#1a6de6"/><path d="M1 5.3h4.1" stroke="#8fbaf8" stroke-width=".7"/><path d="M3 9.5h7M3 11.5h7M3 13.3h6" stroke="#aab6ca" stroke-width=".8"/><rect x="9.500" y="8" width="5.500" height="5" fill="#f5c400" stroke="#8a5d06" stroke-width=".7"/><path d="M9 16v-1.500c0-1 1.500-1.500 3.200-1.500s3.300.5 3.300 1.500v1.500z" fill="#2b3350"/><path d="M11.700 13.300h1.100v2.700h-1.100z" fill="#2f7fe8"/><path d="M9.500 8h5.500v1.500h-5.500z" fill="#2a1a08"/></svg>
<span class="t" style="left:530px;top:1011px;word-spacing:-0.34px;"><span class="wd" style="width:43.0px;letter-spacing:0.06px">Officials</span> <span class="wd" style="width:59.0px;letter-spacing:-0.21px">Categories,</span> <span class="wd" style="width:37.0px;letter-spacing:-0.17px">Coach,</span> <span class="wd" style="width:42.0px;letter-spacing:-0.50px">Referee,</span> <span class="wd" style="width:27.0px;letter-spacing:-0.73px">Press</span></span>
<div class="b sep" style="left:757px;top:1010px;width:1px;height:21px;"></div>
<svg class="i" style="left:761px;top:1012px" width="16" height="16" viewBox="0 0 16 16" ><path d="M2 3.500v9.500c0 1.400 2.700 2.500 6 2.500s6-1.100 6-2.500v-9.500" fill="url(#g18)" stroke="#868d98" stroke-width=".9"/><ellipse cx="8" cy="3.500" rx="6" ry="2.500" fill="#f7f8fa" stroke="#868d98" stroke-width=".9"/><path d="M2 6.700c0 1.400 2.700 2.500 6 2.500s6-1.100 6-2.500M2 9.900c0 1.400 2.700 2.500 6 2.500s6-1.100 6-2.500" fill="none" stroke="#868d98" stroke-width=".9"/></svg>
<span class="t" style="left:784px;top:1011px;letter-spacing:0.03px;">Welcome</span>
<div class="b sep" style="left:840px;top:1010px;width:1px;height:21px;"></div>
<div class="b panel" style="left:0px;top:1039px;width:1286px;height:136px;"></div>
<div class="b ttl" style="left:1px;top:1040px;width:1284px;height:24px;"></div>
<svg class="i" style="left:2px;top:1043px" width="16" height="16" viewBox="0 0 16 16" ><rect x=".5" y="2" width="15" height="12" fill="#24262c" stroke="#5a86d0" stroke-width="1"/><rect x="1" y="2.500" width="14" height="1.500" fill="#6a98e2"/><path d="M2.500 6l2 1.300-2 1.300" fill="none" stroke="#f0f0f0" stroke-width=".9"/><path d="M5.500 9.500h2.500" stroke="#f0f0f0" stroke-width=".8"/></svg>
<span class="t" style="left:23px;top:1042px;word-spacing:-0.34px;"><span class="wd" style="width:46.0px;letter-spacing:-0.38px">Message</span> <span class="wd" style="width:43.0px;letter-spacing:-0.15px">Console</span></span>
<svg class="i" style="left:1243px;top:1043px" width="16" height="16" viewBox="0 0 16 16" ><path d="M2.800 5h10.400l-.9 10.500h-8.600z" fill="url(#g17)" stroke="#6f7c8e" stroke-width=".9"/><path d="M5.700 6.500v7.500M8 6.500v7.500M10.300 6.500v7.500" stroke="#8d99aa" stroke-width="1.100"/><rect x="1.500" y="3" width="13" height="2.200" rx="1" fill="#eef0f4" stroke="#6f7c8e" stroke-width=".8"/><path d="M5.800 3c0-2 4.400-2 4.400 0" fill="#eef0f4" stroke="#6f7c8e" stroke-width=".9"/></svg>
<svg class="i" style="left:1265px;top:1044px" width="16" height="16" viewBox="0 0 16 16" ><rect x="0" y="1" width="16" height="14" fill="#000"/><rect x="1" y="2" width="14" height="2" fill="#b23cf5"/><rect x="1" y="5" width="14" height="9" fill="#fff"/></svg>
<div class="b" style="left:2px;top:1064px;width:1281px;height:108px;border:1px solid #c9c9c9;background:#f1f1f1"></div>
<div class="b panel" style="left:1292px;top:28px;width:426px;height:1148px;"></div>
<div class="b ttl" style="left:1293px;top:29px;width:424px;height:24px;"></div>
<svg class="i" style="left:1294px;top:32px" width="16" height="16" viewBox="0 0 16 16" ><rect x=".5" y="8" width="15" height="8" fill="#fff" stroke="#5b6472"/><path d="M.5 8h15" stroke="#aab4c4"/><path d="M1 11.500h14M5.500 8.500v7M10.500 8.500v7" stroke="#cfd9e8"/><rect x=".2" y="3.800" width="5.300" height="3.200" fill="#1660e0"/><path d="M.2 5.400h5.300" stroke="#6fa2f5" stroke-width=".7"/><path d="M8.200 .3h5.600l2.200 2.200v5.600l-2.200 2.200h-5.600l-2.200-2.200v-5.600z" fill="#3fc21d" stroke="#1b8a12" stroke-width=".9"/><rect x="8.300" y="2.600" width="5.400" height="5.400" fill="#0f7a14"/><path d="M9.200 5.100l1.500 1.700 2.400-3.300" fill="none" stroke="#fff" stroke-width="1.400"/><rect x="9" y="1.500" width="1.300" height="1" fill="#e8f020"/></svg>
<span class="t" style="left:1315px;top:31px;word-spacing:-0.34px;"><span class="wd" style="width:27.0px;letter-spacing:0.25px">Main</span> <span class="wd" style="width:23.0px;letter-spacing:-0.09px">data</span> <span class="wd" style="width:5.0px;text-align:center">/</span> <span class="wd" style="width:35.0px;letter-spacing:-0.33px">Entries</span></span>
<svg class="i" style="left:1675px;top:32px" width="16" height="16" viewBox="0 0 16 16" ><rect x="0" y="1" width="16" height="14" fill="#000"/><rect x="1" y="2" width="14" height="2" fill="#b23cf5"/><rect x="1" y="5" width="14" height="9" fill="#fff"/></svg>
<svg class="i" style="left:1699.5px;top:34.5px" width="10" height="10" viewBox="0 0 10 10" ><path d="M1.200 1.200l7.500 7.500M8.700 1.200l-7.500 7.500" stroke="#f01010" stroke-width="1.700" stroke-linecap="round"/></svg>
<div class="b" style="left:1295px;top:53px;width:420px;height:1119px;border:1px solid #b9b9b9;background:#fff"></div>
<div class="b" style="left:1704px;top:54px;width:10px;height:1117px;background:#f5f5f5"></div>
<div class="b" style="left:1704px;top:54px;width:10px;height:1006px;background:#dcdcdc"></div>
<div class="b gh" style="left:1306px;top:64px;width:388px;height:25px;"></div>
<div class="b" style="left:1306px;top:64px;width:3px;height:1px;background:#5a8ae0"></div>
<div class="b" style="left:1691px;top:64px;width:3px;height:1px;background:#5a8ae0"></div>
<span class="t bd" style="left:1317px;top:67px;letter-spacing:-0.09px;">Main data</span>
<div class="b chev" style="left:1669px;top:68px;width:16px;height:16px;"></div>
<svg class="i" style="left:1672px;top:71px" width="10" height="10" viewBox="0 0 10 10"><path d="M1.700 4.700l3.300-3 3.300 3M1.700 8.700l3.300-3 3.300 3" fill="none" stroke="#111" stroke-width="1.100"/></svg>
<div class="b gb" style="left:1306px;top:89px;width:388px;height:183px;overflow:hidden"><svg class="i" style="left:11px;top:10px" width="16" height="16" viewBox="0 0 16 16"><path d="M2.200 15.700v-3.200c0-1.700 2.300-2.500 5.800-2.500s5.800.8 5.800 2.500v3.200z" fill="#fff" stroke="#111" stroke-width="1"/><path d="M5.500 10.300l2.500 3 2.500-3M2.500 14h4l1.500-1 1.500 1h4M7 14.200l-.8 2M9 14.200l.8 2" fill="none" stroke="#111" stroke-width="1"/><path d="M4.800 1h6.400l1.500 2.300-.3 3.200-2.200 3.500h-4.400l-2.200-3.500-.3-3.200z" fill="url(#g12)" stroke="#8a5d06" stroke-width=".8" stroke-linejoin="round"/></svg><span class="t" style="left:31px;top:9px;letter-spacing:0.12px;">Competitors</span><svg class="i" style="left:11px;top:28px" width="16" height="16" viewBox="0 0 16 16"><path d="M2.200 15.700v-3.200c0-1.700 2.300-2.500 5.800-2.500s5.800.8 5.800 2.500v3.200z" fill="#e8282a" stroke="#b01518" stroke-width=".8"/><path d="M4.500 11.500v5M11.500 11.500v5" stroke="#fff" stroke-width="1.200"/><path d="M6.500 10.300h3v6h-3z" fill="#fff"/><path d="M8 10.500v5.500" stroke="#e8a0a0" stroke-width=".7"/><path d="M4.800 1h6.400l1.500 2.300-.3 3.200-2.200 3.500h-4.400l-2.200-3.500-.3-3.200z" fill="url(#g12)" stroke="#8a5d06" stroke-width=".8" stroke-linejoin="round"/></svg><span class="t" style="left:31px;top:27px;letter-spacing:-0.34px;">Coaches</span><svg class="i" style="left:11px;top:46px" width="16" height="16" viewBox="0 0 16 16"><path d="M2.200 15.700v-3.200c0-1.700 2.300-2.500 5.800-2.500s5.800.8 5.800 2.500v3.200z" fill="#2b3350" stroke="#151a2c" stroke-width=".8"/><path d="M6.300 10.300h3.400l-.7 6h-2z" fill="#e8ecf5"/><path d="M7.400 10.500h1.200l.4 5.500h-2z" fill="#2f7fe8"/><path d="M4.800 1h6.400l1.500 2.300-.3 3.200-2.200 3.500h-4.400l-2.200-3.500-.3-3.200z" fill="url(#g12)" stroke="#8a5d06" stroke-width=".8" stroke-linejoin="round"/><path d="M4.600 1h6.800l1.400 2.200v1.300l-1.300-1.500h-7l-1.300 1.500v-1.300z" fill="#2a1a08" stroke="#2a1a08" stroke-width=".6" stroke-linejoin="round"/></svg><span class="t" style="left:31px;top:45px;letter-spacing:-0.59px;">Referees</span><svg class="i" style="left:11px;top:64px" width="16" height="16" viewBox="0 0 16 16"><path d="M2.200 15.700v-3.200c0-1.700 2.300-2.500 5.800-2.500s5.800.8 5.800 2.500v3.200z" fill="#f4f6fa" stroke="#8a93a8" stroke-width=".8"/><path d="M5.500 10.300l2.500 2 2.500-2" fill="none" stroke="#b8bfd0" stroke-width=".8"/><path d="M7.400 11.500h1.200l.4 4.500h-2z" fill="#2f7fe8"/><path d="M4.800 1h6.400l1.500 2.300-.3 3.200-2.200 3.500h-4.400l-2.200-3.500-.3-3.200z" fill="url(#g12)" stroke="#8a5d06" stroke-width=".8" stroke-linejoin="round"/><path d="M4.600 1h6.800l1.400 2.200v1.300l-1.300-1.500h-7l-1.300 1.500v-1.300z" fill="#2a1a08" stroke="#2a1a08" stroke-width=".6" stroke-linejoin="round"/></svg><span class="t" style="left:31px;top:63px;letter-spacing:0.06px;">Officials</span><svg class="i" style="left:11px;top:82px" width="16" height="16" viewBox="0 0 16 16"><path d="M2 8.500v7h12v-7l-6-6z" fill="url(#g13)" stroke="#8a8a8a" stroke-width=".8"/><path d="M.7 9.200l7.300-7.400 7.300 7.400" fill="none" stroke="#e0251f" stroke-width="2" stroke-linejoin="miter"/><rect x="4" y="9.500" width="3" height="6" fill="#a8a49c" stroke="#77736c" stroke-width=".6"/><rect x="8.800" y="9.500" width="3.700" height="3" fill="#5f8fe0" stroke="#e8eef8" stroke-width=".6"/><path d="M10.650 9.500v3" stroke="#e8eef8" stroke-width=".6"/><path d="M1 15.700h14" stroke="#6a6a6a" stroke-width=".9"/></svg><span class="t" style="left:31px;top:81px;letter-spacing:-0.14px;">Clubs</span><svg class="i" style="left:11px;top:100px" width="16" height="16" viewBox="0 0 16 16"><path d="M0.5 4.0h15v10.5h-2.500v-1.200h-1.500v1.200h-7v-1.200h-1.500v1.200h-2.500z" fill="#f8fafd" stroke="#39414e"/><path d="M0 2.5h7.5v1h8.5v1.600h-16z" fill="#1a6de6"/><path d="M1 3.3h5.5" stroke="#8fbaf8" stroke-width=".7"/><path d="M3 7.5h10M3 9.5h10M3 11.3h9" stroke="#aab6ca" stroke-width=".8"/></svg><span class="t" style="left:31px;top:99px;letter-spacing:-0.20px;">Categories</span><svg class="i" style="left:11px;top:118px" width="16" height="16" viewBox="0 0 16 16"><circle cx="8" cy="8" r="7.200" fill="url(#g14)" stroke="#4a78c0" stroke-width="1.200"/><path d="M3 6c1-2 3-3 4.500-2.500 1 .5.500 2-.5 3s-1 2.500-2 3.500-2.500-1-2.500-2.500.2-1 .5-1.500zM9 6c.5-1.500 2.500-2 4-1s1.500 3 .5 4.500-2 .5-2.500 2-1.500.5-1.500-1 .5-1.500-.5-2.500 0-1.500 0-2zM3.500 11.500c1 0 2 1 2.500 2-.8.300-2-.5-2.500-2z" fill="#fff" opacity=".95"/></svg><span class="t" style="left:31px;top:117px;letter-spacing:0.04px;">Nations</span><svg class="i" style="left:11px;top:136px" width="16" height="16" viewBox="0 0 16 16"><circle cx="8" cy="8" r="7.300" fill="url(#g15)" stroke="#3f9e3a" stroke-width="1"/><circle cx="8" cy="8" r="6" fill="none" stroke="#e8f5c8" stroke-width=".6"/><path d="M7 2.500c2 0 3 1.500 2.500 3s-2 1.500-2.500 3-1 3-2 2.500-1.500-2.500-1-4.500 1.500-3.500 3-4z" fill="#8fc4ee" opacity=".9"/><path d="M9.500 7.500c1.500-.5 3.500 0 4 1.500s-.5 3-2 3.500-2.500-1-2.500-2.500 0-2 .5-2.500z" fill="#3a9434"/><path d="M6.500 9.500h4.500v-2l4.300 3.300-4.300 3.300v-2h-4.500z" fill="#6fbf5a" stroke="#e0f0c0" stroke-width=".7" stroke-linejoin="round"/></svg><span class="t" style="left:31px;top:135px;word-spacing:-0.34px;"><span class="wd" style="width:38.0px;letter-spacing:-0.38px">Federal</span> <span class="wd" style="width:64.0px;letter-spacing:-0.17px">associations</span> <span class="wd" style="width:5.0px;text-align:center">/</span> <span class="wd" style="width:42.0px;letter-spacing:-0.29px">Regions</span></span><svg class="i" style="left:11px;top:154px" width="16" height="16" viewBox="0 0 16 16"><rect x=".5" y="3" width="15" height="12" fill="#fdfdfe" stroke="#4b5361" stroke-width="1"/><rect x="5.500" y="1" width="5" height="3.500" fill="#f4f6fa" stroke="#4b5361" stroke-width=".9"/><rect x="2.500" y="6" width="5" height="5.500" fill="#cfe2fb"/><path d="M9 7h4.500M9 9.500h4.500M10 12h3.500" stroke="#c2c8d4" stroke-width="1"/><path d="M.5 14.500h15" stroke="#4b5361" stroke-width="1.300"/></svg><span class="t" style="left:31px;top:153px;letter-spacing:-0.20px;">Forms</span></div>
<div class="b gh" style="left:1306px;top:286px;width:388px;height:25px;"></div>
<div class="b" style="left:1306px;top:286px;width:3px;height:1px;background:#5a8ae0"></div>
<div class="b" style="left:1691px;top:286px;width:3px;height:1px;background:#5a8ae0"></div>
<span class="t bd" style="left:1317px;top:289px;letter-spacing:-0.11px;">Entries - Overviews / Statistics</span>
<div class="b chev" style="left:1669px;top:290px;width:16px;height:16px;"></div>
<svg class="i" style="left:1672px;top:293px" width="10" height="10" viewBox="0 0 10 10"><path d="M1.700 4.700l3.300-3 3.300 3M1.700 8.700l3.300-3 3.300 3" fill="none" stroke="#111" stroke-width="1.100"/></svg>
<div class="b gb" style="left:1306px;top:311px;width:388px;height:255px;overflow:hidden"><svg class="i" style="left:11px;top:10px" width="16" height="16" viewBox="0 0 16 16"><rect x=".5" y="2.500" width="11" height="11.500" fill="url(#g9)" stroke="#956a08" stroke-width="1"/><path d="M3.300 3.500v-1.700h1.500a1.400 1.400 0 0 1 2.400 0h1.500v1.700z" fill="#dfe4ee" stroke="#4a5470" stroke-width=".9"/><path d="M6.800 5.500h5.700l3 3v7h-8.700z" fill="url(#g8)" stroke="#3c4350" stroke-width="1"/><path d="M12.500 5.500v3h3" fill="#f4f4fb" stroke="#8a86c0" stroke-width=".8"/></svg><span class="t" style="left:31px;top:9px;word-spacing:-0.34px;"><span class="wd" style="width:14.0px;letter-spacing:0.22px">All</span> <span class="wd" style="width:35.0px;letter-spacing:-0.15px">entries</span></span><svg class="i" style="left:11px;top:28px" width="16" height="16" viewBox="0 0 16 16"><path d="M1.500 .8h8.500l4 4v10.400h-12.500z" fill="#cfe3fc" stroke="#4b8be0" stroke-width="1"/><path d="M10 .8v4h4" fill="#e8f2ff" stroke="#7fb0f0" stroke-width=".8"/><path d="M3 11.500h2.500M3 13.200h3" stroke="#4b8be0" stroke-width="1.100"/><path d="M10.300 6l5.400 9.500h-10.800z" fill="url(#g10)" stroke="#c8924a" stroke-width=".8" stroke-linejoin="round"/><path d="M10.300 9v3.300" stroke="#c8661a" stroke-width="1.400"/><rect x="9.600" y="13" width="1.400" height="1.300" fill="#c8661a"/></svg><span class="t" style="left:31px;top:27px;word-spacing:-0.34px;"><span class="wd" style="width:56.0px;letter-spacing:0.16px">Waitinglist</span> <span class="wd" style="width:35.0px;letter-spacing:-0.15px">entries</span></span><svg class="i" style="left:11px;top:46px" width="16" height="16" viewBox="0 0 16 16"><rect x=".5" y="2.500" width="11" height="11.500" fill="url(#g9)" stroke="#956a08" stroke-width="1"/><path d="M3.300 3.500v-1.700h1.500a1.400 1.400 0 0 1 2.400 0h1.500v1.700z" fill="#dfe4ee" stroke="#4a5470" stroke-width=".9"/><path d="M6.800 5.500h5.700l3 3v7h-8.700z" fill="url(#g8)" stroke="#3c4350" stroke-width="1"/><path d="M12.500 5.500v3h3" fill="#f4f4fb" stroke="#8a86c0" stroke-width=".8"/></svg><span class="t" style="left:31px;top:45px;word-spacing:-0.34px;"><span class="wd" style="width:34.0px;letter-spacing:-0.14px">Coach</span> <span class="wd" style="width:35.0px;letter-spacing:-0.15px">entries</span></span><svg class="i" style="left:11px;top:64px" width="16" height="16" viewBox="0 0 16 16"><rect x=".5" y="2.500" width="11" height="11.500" fill="url(#g9)" stroke="#956a08" stroke-width="1"/><path d="M3.300 3.500v-1.700h1.500a1.400 1.400 0 0 1 2.400 0h1.500v1.700z" fill="#dfe4ee" stroke="#4a5470" stroke-width=".9"/><path d="M6.800 5.500h5.700l3 3v7h-8.700z" fill="url(#g8)" stroke="#3c4350" stroke-width="1"/><path d="M12.500 5.500v3h3" fill="#f4f4fb" stroke="#8a86c0" stroke-width=".8"/></svg><span class="t" style="left:31px;top:63px;word-spacing:-0.34px;"><span class="wd" style="width:39.0px;letter-spacing:-0.53px">Referee</span> <span class="wd" style="width:35.0px;letter-spacing:-0.15px">entries</span></span><svg class="i" style="left:11px;top:82px" width="16" height="16" viewBox="0 0 16 16"><rect x=".5" y="2.500" width="11" height="11.500" fill="url(#g9)" stroke="#956a08" stroke-width="1"/><path d="M3.300 3.500v-1.700h1.500a1.400 1.400 0 0 1 2.400 0h1.500v1.700z" fill="#dfe4ee" stroke="#4a5470" stroke-width=".9"/><path d="M6.800 5.500h5.700l3 3v7h-8.700z" fill="url(#g8)" stroke="#3c4350" stroke-width="1"/><path d="M12.500 5.500v3h3" fill="#f4f4fb" stroke="#8a86c0" stroke-width=".8"/></svg><span class="t" style="left:31px;top:81px;word-spacing:-0.34px;"><span class="wd" style="width:43.0px;letter-spacing:0.06px">Officials</span> <span class="wd" style="width:35.0px;letter-spacing:-0.15px">entries</span></span><svg class="i" style="left:11px;top:100px" width="16" height="16" viewBox="0 0 16 16"><rect x=".5" y="2.500" width="11" height="11.500" fill="url(#g9)" stroke="#956a08" stroke-width="1"/><path d="M3.300 3.500v-1.700h1.500a1.400 1.400 0 0 1 2.400 0h1.500v1.700z" fill="#dfe4ee" stroke="#4a5470" stroke-width=".9"/><path d="M6.800 5.500h5.700l3 3v7h-8.700z" fill="url(#g8)" stroke="#3c4350" stroke-width="1"/><path d="M12.500 5.500v3h3" fill="#f4f4fb" stroke="#8a86c0" stroke-width=".8"/></svg><span class="t" style="left:31px;top:99px;word-spacing:-0.34px;"><span class="wd" style="width:28.0px;letter-spacing:-0.17px">Head</span> <span class="wd" style="width:11.0px;letter-spacing:0.50px">of</span> <span class="wd" style="width:57.0px;letter-spacing:-0.04px">Delegation</span></span><svg class="i" style="left:11px;top:118px" width="16" height="16" viewBox="0 0 16 16"><path d="M3.500 1.500h12v14h-12z" fill="url(#g16)" stroke="#c3c3c3" stroke-width="1"/><path d="M15.500 10.500l-5 5" stroke="#c9c9c9" stroke-width="1"/><path d="M15 11.500v3.500h-3.500z" fill="#e2e2e2"/><rect x="2.200" y="1" width="1.800" height="15" fill="#c8602a"/><path d="M1 2.500h2.500M1 4.400h2.500M1 6.300h2.500M1 8.200h2.500M1 10.100h2.500M1 12h2.500M1 13.900h2.500M1 15.500h2.500" stroke="#e7c4a8" stroke-width=".8"/><rect x="7" y="5" width="6" height="2.600" fill="#6d9ce8"/><path d="M8 6.300h4" stroke="#a4c4f4" stroke-width=".8"/><path d="M7 9.700h6" stroke="#6d9ce8" stroke-width="1.100"/></svg><span class="t" style="left:31px;top:117px;word-spacing:-0.34px;"><span class="wd" style="width:30.0px;letter-spacing:-0.14px">Clubs</span> <span class="wd" style="width:20.0px;letter-spacing:-0.01px">and</span> <span class="wd" style="width:35.0px;letter-spacing:-0.15px">entries</span></span><svg class="i" style="left:11px;top:136px" width="16" height="16" viewBox="0 0 16 16"><path d="M3.500 1.500h12v14h-12z" fill="url(#g16)" stroke="#c3c3c3" stroke-width="1"/><path d="M15.500 10.500l-5 5" stroke="#c9c9c9" stroke-width="1"/><path d="M15 11.500v3.500h-3.500z" fill="#e2e2e2"/><rect x="2.200" y="1" width="1.800" height="15" fill="#c8602a"/><path d="M1 2.500h2.500M1 4.400h2.500M1 6.300h2.500M1 8.200h2.500M1 10.100h2.500M1 12h2.500M1 13.900h2.500M1 15.500h2.500" stroke="#e7c4a8" stroke-width=".8"/><rect x="7" y="5" width="6" height="2.600" fill="#6d9ce8"/><path d="M8 6.300h4" stroke="#a4c4f4" stroke-width=".8"/><path d="M7 9.700h6" stroke="#6d9ce8" stroke-width="1.100"/></svg><span class="t" style="left:31px;top:135px;word-spacing:-0.34px;"><span class="wd" style="width:31.0px;letter-spacing:-0.50px">States</span> <span class="wd" style="width:5.0px;text-align:center">/</span> <span class="wd" style="width:42.0px;letter-spacing:-0.29px">Regions</span> <span class="wd" style="width:20.0px;letter-spacing:-0.01px">and</span> <span class="wd" style="width:35.0px;letter-spacing:-0.15px">entries</span></span><svg class="i" style="left:11px;top:154px" width="16" height="16" viewBox="0 0 16 16"><path d="M3.500 1.500h12v14h-12z" fill="url(#g16)" stroke="#c3c3c3" stroke-width="1"/><path d="M15.500 10.500l-5 5" stroke="#c9c9c9" stroke-width="1"/><path d="M15 11.500v3.500h-3.500z" fill="#e2e2e2"/><rect x="2.200" y="1" width="1.800" height="15" fill="#c8602a"/><path d="M1 2.500h2.500M1 4.400h2.500M1 6.300h2.500M1 8.200h2.500M1 10.100h2.500M1 12h2.500M1 13.900h2.500M1 15.500h2.500" stroke="#e7c4a8" stroke-width=".8"/><rect x="7" y="5" width="6" height="2.600" fill="#6d9ce8"/><path d="M8 6.300h4" stroke="#a4c4f4" stroke-width=".8"/><path d="M7 9.700h6" stroke="#6d9ce8" stroke-width="1.100"/></svg><span class="t" style="left:31px;top:153px;word-spacing:-0.34px;"><span class="wd" style="width:41.0px;letter-spacing:0.04px">Nations</span> <span class="wd" style="width:20.0px;letter-spacing:-0.01px">and</span> <span class="wd" style="width:35.0px;letter-spacing:-0.15px">entries</span></span><svg class="i" style="left:11px;top:172px" width="16" height="16" viewBox="0 0 16 16"><path d="M3.500 1.500h12v14h-12z" fill="url(#g16)" stroke="#c3c3c3" stroke-width="1"/><path d="M15.500 10.500l-5 5" stroke="#c9c9c9" stroke-width="1"/><path d="M15 11.500v3.500h-3.500z" fill="#e2e2e2"/><rect x="2.200" y="1" width="1.800" height="15" fill="#c8602a"/><path d="M1 2.500h2.500M1 4.400h2.500M1 6.300h2.500M1 8.200h2.500M1 10.100h2.500M1 12h2.500M1 13.900h2.500M1 15.500h2.500" stroke="#e7c4a8" stroke-width=".8"/><rect x="7" y="5" width="6" height="2.600" fill="#6d9ce8"/><path d="M8 6.300h4" stroke="#a4c4f4" stroke-width=".8"/><path d="M7 9.700h6" stroke="#6d9ce8" stroke-width="1.100"/></svg><span class="t" style="left:31px;top:171px;word-spacing:-0.34px;"><span class="wd" style="width:56.0px;letter-spacing:-0.20px">Categories</span> <span class="wd" style="width:20.0px;letter-spacing:-0.01px">and</span> <span class="wd" style="width:35.0px;letter-spacing:-0.15px">entries</span></span><svg class="i" style="left:11px;top:190px" width="16" height="16" viewBox="0 0 16 16"><path d="M3.500 1.500h12v14h-12z" fill="url(#g16)" stroke="#c3c3c3" stroke-width="1"/><path d="M15.500 10.500l-5 5" stroke="#c9c9c9" stroke-width="1"/><path d="M15 11.500v3.500h-3.500z" fill="#e2e2e2"/><rect x="2.200" y="1" width="1.800" height="15" fill="#c8602a"/><path d="M1 2.500h2.500M1 4.400h2.500M1 6.300h2.500M1 8.200h2.500M1 10.100h2.500M1 12h2.500M1 13.900h2.500M1 15.500h2.500" stroke="#e7c4a8" stroke-width=".8"/><rect x="7" y="5" width="6" height="2.600" fill="#6d9ce8"/><path d="M8 6.300h4" stroke="#a4c4f4" stroke-width=".8"/><path d="M7 9.700h6" stroke="#6d9ce8" stroke-width="1.100"/></svg><span class="t" style="left:31px;top:189px;word-spacing:-0.34px;"><span class="wd" style="width:66.0px;letter-spacing:0.12px">Competitors</span> <span class="wd" style="width:10.0px;letter-spacing:0.33px">in</span> <span class="wd" style="width:54.0px;letter-spacing:-0.14px">categories</span></span><svg class="i" style="left:11px;top:208px" width="16" height="16" viewBox="0 0 16 16"><path d="M3.500 1.500h12v14h-12z" fill="url(#g16)" stroke="#c3c3c3" stroke-width="1"/><path d="M15.500 10.500l-5 5" stroke="#c9c9c9" stroke-width="1"/><path d="M15 11.500v3.500h-3.500z" fill="#e2e2e2"/><rect x="2.200" y="1" width="1.800" height="15" fill="#c8602a"/><path d="M1 2.500h2.500M1 4.400h2.500M1 6.300h2.500M1 8.200h2.500M1 10.100h2.500M1 12h2.500M1 13.900h2.500M1 15.500h2.500" stroke="#e7c4a8" stroke-width=".8"/><rect x="7" y="5" width="6" height="2.600" fill="#6d9ce8"/><path d="M8 6.300h4" stroke="#a4c4f4" stroke-width=".8"/><path d="M7 9.700h6" stroke="#6d9ce8" stroke-width="1.100"/></svg><span class="t" style="left:31px;top:207px;word-spacing:-0.34px;"><span class="wd" style="width:33.0px;letter-spacing:-0.17px">Clubs,</span> <span class="wd" style="width:69.0px;letter-spacing:0.08px">Competitors,</span> <span class="wd" style="width:56.0px;letter-spacing:-0.20px">Categories</span></span><svg class="i" style="left:11px;top:226px" width="16" height="16" viewBox="0 0 16 16"><path d="M3.500 1.500h12v14h-12z" fill="url(#g16)" stroke="#c3c3c3" stroke-width="1"/><path d="M15.500 10.500l-5 5" stroke="#c9c9c9" stroke-width="1"/><path d="M15 11.500v3.500h-3.500z" fill="#e2e2e2"/><rect x="2.200" y="1" width="1.800" height="15" fill="#c8602a"/><path d="M1 2.500h2.500M1 4.400h2.500M1 6.300h2.500M1 8.200h2.500M1 10.100h2.500M1 12h2.500M1 13.900h2.500M1 15.500h2.500" stroke="#e7c4a8" stroke-width=".8"/><rect x="7" y="5" width="6" height="2.600" fill="#6d9ce8"/><path d="M8 6.300h4" stroke="#a4c4f4" stroke-width=".8"/><path d="M7 9.700h6" stroke="#6d9ce8" stroke-width="1.100"/></svg><span class="t" style="left:31px;top:225px;word-spacing:-0.34px;"><span class="wd" style="width:33.0px;letter-spacing:-0.17px">Clubs,</span> <span class="wd" style="width:59.0px;letter-spacing:-0.21px">Categories,</span> <span class="wd" style="width:66.0px;letter-spacing:0.12px">Competitors</span></span></div>
<div class="b gh" style="left:1306px;top:580px;width:388px;height:25px;"></div>
<div class="b" style="left:1306px;top:580px;width:3px;height:1px;background:#5a8ae0"></div>
<div class="b" style="left:1691px;top:580px;width:3px;height:1px;background:#5a8ae0"></div>
<span class="t bd" style="left:1317px;top:583px;letter-spacing:-0.12px;">Reports</span>
<div class="b chev" style="left:1669px;top:584px;width:16px;height:16px;"></div>
<svg class="i" style="left:1672px;top:587px" width="10" height="10" viewBox="0 0 10 10"><path d="M1.700 4.700l3.300-3 3.300 3M1.700 8.700l3.300-3 3.300 3" fill="none" stroke="#111" stroke-width="1.100"/></svg>
<div class="b gb" style="left:1306px;top:605px;width:388px;height:471px;overflow:hidden"><svg class="i" style="left:11px;top:10px" width="16" height="16" viewBox="0 0 16 16"><path d="M3.500 1.500h12v14h-12z" fill="url(#g16)" stroke="#c3c3c3" stroke-width="1"/><path d="M15.500 10.500l-5 5" stroke="#c9c9c9" stroke-width="1"/><path d="M15 11.500v3.500h-3.500z" fill="#e2e2e2"/><rect x="2.200" y="1" width="1.800" height="15" fill="#c8602a"/><path d="M1 2.500h2.500M1 4.400h2.500M1 6.300h2.500M1 8.200h2.500M1 10.100h2.500M1 12h2.500M1 13.900h2.500M1 15.500h2.500" stroke="#e7c4a8" stroke-width=".8"/><rect x="7" y="5" width="6" height="2.600" fill="#6d9ce8"/><path d="M8 6.300h4" stroke="#a4c4f4" stroke-width=".8"/><path d="M7 9.700h6" stroke="#6d9ce8" stroke-width="1.100"/></svg><span class="t" style="left:31px;top:9px;word-spacing:-0.34px;"><span class="wd" style="width:32.0px;letter-spacing:-0.34px">Result</span> <span class="wd" style="width:27.0px;letter-spacing:-0.09px">Book</span> <span class="wd" style="width:5.0px;text-align:center">-</span> <span class="wd" style="width:51.0px;letter-spacing:-0.04px">Countries</span></span><svg class="i" style="left:11px;top:28px" width="16" height="16" viewBox="0 0 16 16"><path d="M3.500 1.500h12v14h-12z" fill="url(#g16)" stroke="#c3c3c3" stroke-width="1"/><path d="M15.500 10.500l-5 5" stroke="#c9c9c9" stroke-width="1"/><path d="M15 11.500v3.500h-3.500z" fill="#e2e2e2"/><rect x="2.200" y="1" width="1.800" height="15" fill="#c8602a"/><path d="M1 2.500h2.500M1 4.400h2.500M1 6.300h2.500M1 8.200h2.500M1 10.100h2.500M1 12h2.500M1 13.900h2.500M1 15.500h2.500" stroke="#e7c4a8" stroke-width=".8"/><rect x="7" y="5" width="6" height="2.600" fill="#6d9ce8"/><path d="M8 6.300h4" stroke="#a4c4f4" stroke-width=".8"/><path d="M7 9.700h6" stroke="#6d9ce8" stroke-width="1.100"/></svg><span class="t" style="left:31px;top:27px;word-spacing:-0.34px;"><span class="wd" style="width:32.0px;letter-spacing:-0.34px">Result</span> <span class="wd" style="width:27.0px;letter-spacing:-0.09px">Book</span> <span class="wd" style="width:5.0px;text-align:center">-</span> <span class="wd" style="width:51.0px;letter-spacing:-0.04px">Countries</span> <span class="wd" style="width:20.0px;letter-spacing:-0.01px">and</span> <span class="wd" style="width:30.0px;letter-spacing:-0.14px">Clubs</span></span><svg class="i" style="left:11px;top:46px" width="16" height="16" viewBox="0 0 16 16"><path d="M3.500 1.500h12v14h-12z" fill="url(#g16)" stroke="#c3c3c3" stroke-width="1"/><path d="M15.500 10.500l-5 5" stroke="#c9c9c9" stroke-width="1"/><path d="M15 11.500v3.500h-3.500z" fill="#e2e2e2"/><rect x="2.200" y="1" width="1.800" height="15" fill="#c8602a"/><path d="M1 2.500h2.500M1 4.400h2.500M1 6.300h2.500M1 8.200h2.500M1 10.100h2.500M1 12h2.500M1 13.900h2.500M1 15.500h2.500" stroke="#e7c4a8" stroke-width=".8"/><rect x="7" y="5" width="6" height="2.600" fill="#6d9ce8"/><path d="M8 6.300h4" stroke="#a4c4f4" stroke-width=".8"/><path d="M7 9.700h6" stroke="#6d9ce8" stroke-width="1.100"/></svg><span class="t" style="left:31px;top:45px;word-spacing:-0.34px;"><span class="wd" style="width:32.0px;letter-spacing:-0.34px">Result</span> <span class="wd" style="width:27.0px;letter-spacing:-0.09px">Book</span> <span class="wd" style="width:5.0px;text-align:center">-</span> <span class="wd" style="width:30.0px;letter-spacing:-0.14px">Clubs</span></span><svg class="i" style="left:11px;top:82px" width="16" height="16" viewBox="0 0 16 16"><path d="M3.500 1.500h12v14h-12z" fill="url(#g16)" stroke="#c3c3c3" stroke-width="1"/><path d="M15.500 10.500l-5 5" stroke="#c9c9c9" stroke-width="1"/><path d="M15 11.500v3.500h-3.500z" fill="#e2e2e2"/><rect x="2.200" y="1" width="1.800" height="15" fill="#c8602a"/><path d="M1 2.500h2.500M1 4.400h2.500M1 6.300h2.500M1 8.200h2.500M1 10.100h2.500M1 12h2.500M1 13.900h2.500M1 15.500h2.500" stroke="#e7c4a8" stroke-width=".8"/><rect x="7" y="5" width="6" height="2.600" fill="#6d9ce8"/><path d="M8 6.300h4" stroke="#a4c4f4" stroke-width=".8"/><path d="M7 9.700h6" stroke="#6d9ce8" stroke-width="1.100"/></svg><span class="t" style="left:31px;top:81px;word-spacing:-0.34px;"><span class="wd" style="width:43.0px;letter-spacing:0.14px">Country</span> <span class="wd" style="width:35.0px;letter-spacing:-0.33px">Entries</span></span><svg class="i" style="left:11px;top:100px" width="16" height="16" viewBox="0 0 16 16"><path d="M3.500 1.500h12v14h-12z" fill="url(#g16)" stroke="#c3c3c3" stroke-width="1"/><path d="M15.500 10.500l-5 5" stroke="#c9c9c9" stroke-width="1"/><path d="M15 11.500v3.500h-3.500z" fill="#e2e2e2"/><rect x="2.200" y="1" width="1.800" height="15" fill="#c8602a"/><path d="M1 2.500h2.500M1 4.400h2.500M1 6.300h2.500M1 8.200h2.500M1 10.100h2.500M1 12h2.500M1 13.900h2.500M1 15.500h2.500" stroke="#e7c4a8" stroke-width=".8"/><rect x="7" y="5" width="6" height="2.600" fill="#6d9ce8"/><path d="M8 6.300h4" stroke="#a4c4f4" stroke-width=".8"/><path d="M7 9.700h6" stroke="#6d9ce8" stroke-width="1.100"/></svg><span class="t" style="left:31px;top:99px;word-spacing:-0.34px;"><span class="wd" style="width:25.0px;letter-spacing:0.08px">Club</span> <span class="wd" style="width:35.0px;letter-spacing:-0.33px">Entries</span></span><svg class="i" style="left:11px;top:118px" width="16" height="16" viewBox="0 0 16 16"><path d="M3.500 1.500h12v14h-12z" fill="url(#g16)" stroke="#c3c3c3" stroke-width="1"/><path d="M15.500 10.500l-5 5" stroke="#c9c9c9" stroke-width="1"/><path d="M15 11.500v3.500h-3.500z" fill="#e2e2e2"/><rect x="2.200" y="1" width="1.800" height="15" fill="#c8602a"/><path d="M1 2.500h2.500M1 4.400h2.500M1 6.300h2.500M1 8.200h2.500M1 10.100h2.500M1 12h2.500M1 13.900h2.500M1 15.500h2.500" stroke="#e7c4a8" stroke-width=".8"/><rect x="7" y="5" width="6" height="2.600" fill="#6d9ce8"/><path d="M8 6.300h4" stroke="#a4c4f4" stroke-width=".8"/><path d="M7 9.700h6" stroke="#6d9ce8" stroke-width="1.100"/></svg><span class="t" style="left:31px;top:117px;word-spacing:-0.34px;"><span class="wd" style="width:67.0px;letter-spacing:0.07px">Participation</span> <span class="wd" style="width:34.0px;letter-spacing:0.09px">(Total)</span></span><svg class="i" style="left:11px;top:136px" width="16" height="16" viewBox="0 0 16 16"><path d="M3.500 1.500h12v14h-12z" fill="url(#g16)" stroke="#c3c3c3" stroke-width="1"/><path d="M15.500 10.500l-5 5" stroke="#c9c9c9" stroke-width="1"/><path d="M15 11.500v3.500h-3.500z" fill="#e2e2e2"/><rect x="2.200" y="1" width="1.800" height="15" fill="#c8602a"/><path d="M1 2.500h2.500M1 4.400h2.500M1 6.300h2.500M1 8.200h2.500M1 10.100h2.500M1 12h2.500M1 13.900h2.500M1 15.500h2.500" stroke="#e7c4a8" stroke-width=".8"/><rect x="7" y="5" width="6" height="2.600" fill="#6d9ce8"/><path d="M8 6.300h4" stroke="#a4c4f4" stroke-width=".8"/><path d="M7 9.700h6" stroke="#6d9ce8" stroke-width="1.100"/></svg><span class="t" style="left:31px;top:135px;word-spacing:-0.34px;"><span class="wd" style="width:67.0px;letter-spacing:0.07px">Participation</span> <span class="wd" style="width:39.0px;letter-spacing:-0.29px">(Entries</span> <span class="wd" style="width:13.0px;letter-spacing:-0.50px">By</span> <span class="wd" style="width:48.0px;letter-spacing:-0.00px">Birthday)</span> <span class="wd" style="width:13.0px;letter-spacing:0.16px">by</span> <span class="wd" style="width:25.0px;letter-spacing:0.08px">Club</span></span><svg class="i" style="left:11px;top:154px" width="16" height="16" viewBox="0 0 16 16"><path d="M3.500 1.500h12v14h-12z" fill="url(#g16)" stroke="#c3c3c3" stroke-width="1"/><path d="M15.500 10.500l-5 5" stroke="#c9c9c9" stroke-width="1"/><path d="M15 11.500v3.500h-3.500z" fill="#e2e2e2"/><rect x="2.200" y="1" width="1.800" height="15" fill="#c8602a"/><path d="M1 2.500h2.500M1 4.400h2.500M1 6.300h2.500M1 8.200h2.500M1 10.100h2.500M1 12h2.500M1 13.900h2.500M1 15.500h2.500" stroke="#e7c4a8" stroke-width=".8"/><rect x="7" y="5" width="6" height="2.600" fill="#6d9ce8"/><path d="M8 6.300h4" stroke="#a4c4f4" stroke-width=".8"/><path d="M7 9.700h6" stroke="#6d9ce8" stroke-width="1.100"/></svg><span class="t" style="left:31px;top:153px;word-spacing:-0.34px;"><span class="wd" style="width:67.0px;letter-spacing:0.07px">Participation</span> <span class="wd" style="width:43.0px;letter-spacing:-0.26px">(Entries)</span></span><svg class="i" style="left:11px;top:172px" width="16" height="16" viewBox="0 0 16 16"><path d="M3.500 1.500h12v14h-12z" fill="url(#g16)" stroke="#c3c3c3" stroke-width="1"/><path d="M15.500 10.500l-5 5" stroke="#c9c9c9" stroke-width="1"/><path d="M15 11.500v3.500h-3.500z" fill="#e2e2e2"/><rect x="2.200" y="1" width="1.800" height="15" fill="#c8602a"/><path d="M1 2.500h2.500M1 4.400h2.500M1 6.300h2.500M1 8.200h2.500M1 10.100h2.500M1 12h2.500M1 13.900h2.500M1 15.500h2.500" stroke="#e7c4a8" stroke-width=".8"/><rect x="7" y="5" width="6" height="2.600" fill="#6d9ce8"/><path d="M8 6.300h4" stroke="#a4c4f4" stroke-width=".8"/><path d="M7 9.700h6" stroke="#6d9ce8" stroke-width="1.100"/></svg><span class="t" style="left:31px;top:171px;word-spacing:-0.34px;"><span class="wd" style="width:67.0px;letter-spacing:0.07px">Participation</span> <span class="wd" style="width:43.0px;letter-spacing:-0.26px">(Entries)</span> <span class="wd" style="width:13.0px;letter-spacing:0.16px">by</span> <span class="wd" style="width:25.0px;letter-spacing:0.08px">Club</span></span><svg class="i" style="left:11px;top:190px" width="16" height="16" viewBox="0 0 16 16"><path d="M3.500 1.500h12v14h-12z" fill="url(#g16)" stroke="#c3c3c3" stroke-width="1"/><path d="M15.500 10.500l-5 5" stroke="#c9c9c9" stroke-width="1"/><path d="M15 11.500v3.500h-3.500z" fill="#e2e2e2"/><rect x="2.200" y="1" width="1.800" height="15" fill="#c8602a"/><path d="M1 2.500h2.500M1 4.400h2.500M1 6.300h2.500M1 8.200h2.500M1 10.100h2.500M1 12h2.500M1 13.900h2.500M1 15.500h2.500" stroke="#e7c4a8" stroke-width=".8"/><rect x="7" y="5" width="6" height="2.600" fill="#6d9ce8"/><path d="M8 6.300h4" stroke="#a4c4f4" stroke-width=".8"/><path d="M7 9.700h6" stroke="#6d9ce8" stroke-width="1.100"/></svg><span class="t" style="left:31px;top:189px;word-spacing:-0.34px;"><span class="wd" style="width:67.0px;letter-spacing:0.07px">Participation</span> <span class="wd" style="width:39.0px;letter-spacing:-0.29px">(Entries</span> <span class="wd" style="width:13.0px;letter-spacing:-0.50px">By</span> <span class="wd" style="width:48.0px;letter-spacing:-0.00px">Birthday)</span></span><svg class="i" style="left:11px;top:208px" width="16" height="16" viewBox="0 0 16 16"><path d="M3.500 1.500h12v14h-12z" fill="url(#g16)" stroke="#c3c3c3" stroke-width="1"/><path d="M15.500 10.500l-5 5" stroke="#c9c9c9" stroke-width="1"/><path d="M15 11.500v3.500h-3.500z" fill="#e2e2e2"/><rect x="2.200" y="1" width="1.800" height="15" fill="#c8602a"/><path d="M1 2.500h2.500M1 4.400h2.500M1 6.300h2.500M1 8.200h2.500M1 10.100h2.500M1 12h2.500M1 13.900h2.500M1 15.500h2.500" stroke="#e7c4a8" stroke-width=".8"/><rect x="7" y="5" width="6" height="2.600" fill="#6d9ce8"/><path d="M8 6.300h4" stroke="#a4c4f4" stroke-width=".8"/><path d="M7 9.700h6" stroke="#6d9ce8" stroke-width="1.100"/></svg><span class="t" style="left:31px;top:207px;word-spacing:-0.34px;"><span class="wd" style="width:67.0px;letter-spacing:0.07px">Participation</span> <span class="wd" style="width:39.0px;letter-spacing:-0.29px">(Entries</span> <span class="wd" style="width:13.0px;letter-spacing:-0.50px">By</span> <span class="wd" style="width:48.0px;letter-spacing:-0.00px">Birthday)</span> <span class="wd" style="width:13.0px;letter-spacing:0.16px">by</span> <span class="wd" style="width:25.0px;letter-spacing:0.08px">Club</span></span><svg class="i" style="left:11px;top:226px" width="16" height="16" viewBox="0 0 16 16"><path d="M3.500 1.500h12v14h-12z" fill="url(#g16)" stroke="#c3c3c3" stroke-width="1"/><path d="M15.500 10.500l-5 5" stroke="#c9c9c9" stroke-width="1"/><path d="M15 11.500v3.500h-3.500z" fill="#e2e2e2"/><rect x="2.200" y="1" width="1.800" height="15" fill="#c8602a"/><path d="M1 2.500h2.500M1 4.400h2.500M1 6.300h2.500M1 8.200h2.500M1 10.100h2.500M1 12h2.500M1 13.900h2.500M1 15.500h2.500" stroke="#e7c4a8" stroke-width=".8"/><rect x="7" y="5" width="6" height="2.600" fill="#6d9ce8"/><path d="M8 6.300h4" stroke="#a4c4f4" stroke-width=".8"/><path d="M7 9.700h6" stroke="#6d9ce8" stroke-width="1.100"/></svg><span class="t" style="left:31px;top:225px;word-spacing:-0.34px;"><span class="wd" style="width:67.0px;letter-spacing:0.07px">Participation</span> <span class="wd" style="width:33.0px;letter-spacing:0.20px">Count</span></span><svg class="i" style="left:11px;top:244px" width="16" height="16" viewBox="0 0 16 16"><path d="M3.500 1.500h12v14h-12z" fill="url(#g16)" stroke="#c3c3c3" stroke-width="1"/><path d="M15.500 10.500l-5 5" stroke="#c9c9c9" stroke-width="1"/><path d="M15 11.500v3.500h-3.500z" fill="#e2e2e2"/><rect x="2.200" y="1" width="1.800" height="15" fill="#c8602a"/><path d="M1 2.500h2.500M1 4.400h2.500M1 6.300h2.500M1 8.200h2.500M1 10.100h2.500M1 12h2.500M1 13.900h2.500M1 15.500h2.500" stroke="#e7c4a8" stroke-width=".8"/><rect x="7" y="5" width="6" height="2.600" fill="#6d9ce8"/><path d="M8 6.300h4" stroke="#a4c4f4" stroke-width=".8"/><path d="M7 9.700h6" stroke="#6d9ce8" stroke-width="1.100"/></svg><span class="t" style="left:31px;top:243px;word-spacing:-0.34px;"><span class="wd" style="width:67.0px;letter-spacing:0.07px">Participation</span> <span class="wd" style="width:33.0px;letter-spacing:0.20px">Count</span> <span class="wd" style="width:13.0px;letter-spacing:0.16px">by</span> <span class="wd" style="width:25.0px;letter-spacing:0.08px">Club</span></span><svg class="i" style="left:11px;top:262px" width="16" height="16" viewBox="0 0 16 16"><path d="M3.500 1.500h12v14h-12z" fill="url(#g16)" stroke="#c3c3c3" stroke-width="1"/><path d="M15.500 10.500l-5 5" stroke="#c9c9c9" stroke-width="1"/><path d="M15 11.500v3.500h-3.500z" fill="#e2e2e2"/><rect x="2.200" y="1" width="1.800" height="15" fill="#c8602a"/><path d="M1 2.500h2.500M1 4.400h2.500M1 6.300h2.500M1 8.200h2.500M1 10.100h2.500M1 12h2.500M1 13.900h2.500M1 15.500h2.500" stroke="#e7c4a8" stroke-width=".8"/><rect x="7" y="5" width="6" height="2.600" fill="#6d9ce8"/><path d="M8 6.300h4" stroke="#a4c4f4" stroke-width=".8"/><path d="M7 9.700h6" stroke="#6d9ce8" stroke-width="1.100"/></svg><span class="t" style="left:31px;top:261px;letter-spacing:-0.20px;">Statistics</span><svg class="i" style="left:11px;top:280px" width="16" height="16" viewBox="0 0 16 16"><path d="M3.500 1.500h12v14h-12z" fill="url(#g16)" stroke="#c3c3c3" stroke-width="1"/><path d="M15.500 10.500l-5 5" stroke="#c9c9c9" stroke-width="1"/><path d="M15 11.500v3.500h-3.500z" fill="#e2e2e2"/><rect x="2.200" y="1" width="1.800" height="15" fill="#c8602a"/><path d="M1 2.500h2.500M1 4.400h2.500M1 6.300h2.500M1 8.200h2.500M1 10.100h2.500M1 12h2.500M1 13.900h2.500M1 15.500h2.500" stroke="#e7c4a8" stroke-width=".8"/><rect x="7" y="5" width="6" height="2.600" fill="#6d9ce8"/><path d="M8 6.300h4" stroke="#a4c4f4" stroke-width=".8"/><path d="M7 9.700h6" stroke="#6d9ce8" stroke-width="1.100"/></svg><span class="t" style="left:31px;top:279px;word-spacing:-0.34px;"><span class="wd" style="width:67.0px;letter-spacing:0.07px">Participation</span> <span class="wd" style="width:33.0px;letter-spacing:0.20px">Count</span> <span class="wd" style="width:5.0px;text-align:center">-</span> <span class="wd" style="width:43.0px;letter-spacing:0.06px">Officials</span></span><svg class="i" style="left:11px;top:298px" width="16" height="16" viewBox="0 0 16 16"><path d="M3.500 1.500h12v14h-12z" fill="url(#g16)" stroke="#c3c3c3" stroke-width="1"/><path d="M15.500 10.500l-5 5" stroke="#c9c9c9" stroke-width="1"/><path d="M15 11.500v3.500h-3.500z" fill="#e2e2e2"/><rect x="2.200" y="1" width="1.800" height="15" fill="#c8602a"/><path d="M1 2.500h2.500M1 4.400h2.500M1 6.300h2.500M1 8.200h2.500M1 10.100h2.500M1 12h2.500M1 13.900h2.500M1 15.500h2.500" stroke="#e7c4a8" stroke-width=".8"/><rect x="7" y="5" width="6" height="2.600" fill="#6d9ce8"/><path d="M8 6.300h4" stroke="#a4c4f4" stroke-width=".8"/><path d="M7 9.700h6" stroke="#6d9ce8" stroke-width="1.100"/></svg><span class="t" style="left:31px;top:297px;word-spacing:-0.34px;"><span class="wd" style="width:43.0px;letter-spacing:0.06px">Officials</span> <span class="wd" style="width:17.0px;letter-spacing:-0.11px">per</span> <span class="wd" style="width:48.0px;letter-spacing:-0.09px">Category</span></span><svg class="i" style="left:11px;top:316px" width="16" height="16" viewBox="0 0 16 16"><path d="M3.500 1.500h12v14h-12z" fill="url(#g16)" stroke="#c3c3c3" stroke-width="1"/><path d="M15.500 10.500l-5 5" stroke="#c9c9c9" stroke-width="1"/><path d="M15 11.500v3.500h-3.500z" fill="#e2e2e2"/><rect x="2.200" y="1" width="1.800" height="15" fill="#c8602a"/><path d="M1 2.500h2.500M1 4.400h2.500M1 6.300h2.500M1 8.200h2.500M1 10.100h2.500M1 12h2.500M1 13.900h2.500M1 15.500h2.500" stroke="#e7c4a8" stroke-width=".8"/><rect x="7" y="5" width="6" height="2.600" fill="#6d9ce8"/><path d="M8 6.300h4" stroke="#a4c4f4" stroke-width=".8"/><path d="M7 9.700h6" stroke="#6d9ce8" stroke-width="1.100"/></svg><span class="t" style="left:31px;top:315px;word-spacing:-0.34px;"><span class="wd" style="width:43.0px;letter-spacing:0.06px">Officials</span> <span class="wd" style="width:17.0px;letter-spacing:-0.11px">per</span> <span class="wd" style="width:48.0px;letter-spacing:-0.09px">Category</span> <span class="wd" style="width:13.0px;letter-spacing:0.16px">by</span> <span class="wd" style="width:25.0px;letter-spacing:0.08px">Club</span></span><svg class="i" style="left:11px;top:334px" width="16" height="16" viewBox="0 0 16 16"><path d="M3.500 1.500h12v14h-12z" fill="url(#g16)" stroke="#c3c3c3" stroke-width="1"/><path d="M15.500 10.500l-5 5" stroke="#c9c9c9" stroke-width="1"/><path d="M15 11.500v3.500h-3.500z" fill="#e2e2e2"/><rect x="2.200" y="1" width="1.800" height="15" fill="#c8602a"/><path d="M1 2.500h2.500M1 4.400h2.500M1 6.300h2.500M1 8.200h2.500M1 10.100h2.500M1 12h2.500M1 13.900h2.500M1 15.500h2.500" stroke="#e7c4a8" stroke-width=".8"/><rect x="7" y="5" width="6" height="2.600" fill="#6d9ce8"/><path d="M8 6.300h4" stroke="#a4c4f4" stroke-width=".8"/><path d="M7 9.700h6" stroke="#6d9ce8" stroke-width="1.100"/></svg><span class="t" style="left:31px;top:333px;word-spacing:-0.34px;"><span class="wd" style="width:43.0px;letter-spacing:0.06px">Officials</span> <span class="wd" style="width:17.0px;letter-spacing:-0.11px">per</span> <span class="wd" style="width:43.0px;letter-spacing:0.14px">Country</span></span><svg class="i" style="left:11px;top:352px" width="16" height="16" viewBox="0 0 16 16"><path d="M3.500 1.500h12v14h-12z" fill="url(#g16)" stroke="#c3c3c3" stroke-width="1"/><path d="M15.500 10.500l-5 5" stroke="#c9c9c9" stroke-width="1"/><path d="M15 11.500v3.500h-3.500z" fill="#e2e2e2"/><rect x="2.200" y="1" width="1.800" height="15" fill="#c8602a"/><path d="M1 2.500h2.500M1 4.400h2.500M1 6.300h2.500M1 8.200h2.500M1 10.100h2.500M1 12h2.500M1 13.900h2.500M1 15.500h2.500" stroke="#e7c4a8" stroke-width=".8"/><rect x="7" y="5" width="6" height="2.600" fill="#6d9ce8"/><path d="M8 6.300h4" stroke="#a4c4f4" stroke-width=".8"/><path d="M7 9.700h6" stroke="#6d9ce8" stroke-width="1.100"/></svg><span class="t" style="left:31px;top:351px;word-spacing:-0.34px;"><span class="wd" style="width:43.0px;letter-spacing:0.06px">Officials</span> <span class="wd" style="width:17.0px;letter-spacing:-0.11px">per</span> <span class="wd" style="width:25.0px;letter-spacing:0.08px">Club</span></span><svg class="i" style="left:11px;top:370px" width="16" height="16" viewBox="0 0 16 16"><path d="M3.500 1.500h12v14h-12z" fill="url(#g16)" stroke="#c3c3c3" stroke-width="1"/><path d="M15.500 10.500l-5 5" stroke="#c9c9c9" stroke-width="1"/><path d="M15 11.500v3.500h-3.500z" fill="#e2e2e2"/><rect x="2.200" y="1" width="1.800" height="15" fill="#c8602a"/><path d="M1 2.500h2.500M1 4.400h2.500M1 6.300h2.500M1 8.200h2.500M1 10.100h2.500M1 12h2.500M1 13.900h2.500M1 15.500h2.500" stroke="#e7c4a8" stroke-width=".8"/><rect x="7" y="5" width="6" height="2.600" fill="#6d9ce8"/><path d="M8 6.300h4" stroke="#a4c4f4" stroke-width=".8"/><path d="M7 9.700h6" stroke="#6d9ce8" stroke-width="1.100"/></svg><span class="t" style="left:31px;top:369px;word-spacing:-0.34px;"><span class="wd" style="width:43.0px;letter-spacing:0.06px">Officials</span> <span class="wd" style="width:13.0px;letter-spacing:0.16px">by</span> <span class="wd" style="width:30.0px;letter-spacing:0.00px">Other</span> <span class="wd" style="width:23.0px;letter-spacing:-0.42px">Role</span></span><svg class="i" style="left:11px;top:388px" width="16" height="16" viewBox="0 0 16 16"><path d="M3.500 1.500h12v14h-12z" fill="url(#g16)" stroke="#c3c3c3" stroke-width="1"/><path d="M15.500 10.500l-5 5" stroke="#c9c9c9" stroke-width="1"/><path d="M15 11.500v3.500h-3.500z" fill="#e2e2e2"/><rect x="2.200" y="1" width="1.800" height="15" fill="#c8602a"/><path d="M1 2.500h2.500M1 4.400h2.500M1 6.300h2.500M1 8.200h2.500M1 10.100h2.500M1 12h2.500M1 13.900h2.500M1 15.500h2.500" stroke="#e7c4a8" stroke-width=".8"/><rect x="7" y="5" width="6" height="2.600" fill="#6d9ce8"/><path d="M8 6.300h4" stroke="#a4c4f4" stroke-width=".8"/><path d="M7 9.700h6" stroke="#6d9ce8" stroke-width="1.100"/></svg><span class="t" style="left:31px;top:387px;word-spacing:-0.34px;"><span class="wd" style="width:35.0px;letter-spacing:-0.33px">Entries</span> <span class="wd" style="width:10.0px;letter-spacing:0.33px">in</span> <span class="wd" style="width:56.0px;letter-spacing:-0.20px">Categories</span> <span class="wd" style="width:5.0px;text-align:center">-</span> <span class="wd" style="width:43.0px;letter-spacing:0.14px">Country</span></span><svg class="i" style="left:11px;top:406px" width="16" height="16" viewBox="0 0 16 16"><path d="M3.500 1.500h12v14h-12z" fill="url(#g16)" stroke="#c3c3c3" stroke-width="1"/><path d="M15.500 10.500l-5 5" stroke="#c9c9c9" stroke-width="1"/><path d="M15 11.500v3.500h-3.500z" fill="#e2e2e2"/><rect x="2.200" y="1" width="1.800" height="15" fill="#c8602a"/><path d="M1 2.500h2.500M1 4.400h2.500M1 6.300h2.500M1 8.200h2.500M1 10.100h2.500M1 12h2.500M1 13.900h2.500M1 15.500h2.500" stroke="#e7c4a8" stroke-width=".8"/><rect x="7" y="5" width="6" height="2.600" fill="#6d9ce8"/><path d="M8 6.300h4" stroke="#a4c4f4" stroke-width=".8"/><path d="M7 9.700h6" stroke="#6d9ce8" stroke-width="1.100"/></svg><span class="t" style="left:31px;top:405px;word-spacing:-0.34px;"><span class="wd" style="width:35.0px;letter-spacing:-0.33px">Entries</span> <span class="wd" style="width:10.0px;letter-spacing:0.33px">in</span> <span class="wd" style="width:56.0px;letter-spacing:-0.20px">Categories</span></span><svg class="i" style="left:11px;top:424px" width="16" height="16" viewBox="0 0 16 16"><path d="M3.500 1.500h12v14h-12z" fill="url(#g16)" stroke="#c3c3c3" stroke-width="1"/><path d="M15.500 10.500l-5 5" stroke="#c9c9c9" stroke-width="1"/><path d="M15 11.500v3.500h-3.500z" fill="#e2e2e2"/><rect x="2.200" y="1" width="1.800" height="15" fill="#c8602a"/><path d="M1 2.500h2.500M1 4.400h2.500M1 6.300h2.500M1 8.200h2.500M1 10.100h2.500M1 12h2.500M1 13.900h2.500M1 15.500h2.500" stroke="#e7c4a8" stroke-width=".8"/><rect x="7" y="5" width="6" height="2.600" fill="#6d9ce8"/><path d="M8 6.300h4" stroke="#a4c4f4" stroke-width=".8"/><path d="M7 9.700h6" stroke="#6d9ce8" stroke-width="1.100"/></svg><span class="t" style="left:31px;top:423px;word-spacing:-0.34px;"><span class="wd" style="width:35.0px;letter-spacing:-0.33px">Entries</span> <span class="wd" style="width:10.0px;letter-spacing:0.33px">in</span> <span class="wd" style="width:56.0px;letter-spacing:-0.20px">Categories</span> <span class="wd" style="width:6.0px;text-align:center">1</span> <span class="wd" style="width:38.0px;letter-spacing:0.09px">Athlete</span></span><svg class="i" style="left:11px;top:442px" width="16" height="16" viewBox="0 0 16 16"><path d="M3.500 1.500h12v14h-12z" fill="url(#g16)" stroke="#c3c3c3" stroke-width="1"/><path d="M15.500 10.500l-5 5" stroke="#c9c9c9" stroke-width="1"/><path d="M15 11.500v3.500h-3.500z" fill="#e2e2e2"/><rect x="2.200" y="1" width="1.800" height="15" fill="#c8602a"/><path d="M1 2.500h2.500M1 4.400h2.500M1 6.300h2.500M1 8.200h2.500M1 10.100h2.500M1 12h2.500M1 13.900h2.500M1 15.500h2.500" stroke="#e7c4a8" stroke-width=".8"/><rect x="7" y="5" width="6" height="2.600" fill="#6d9ce8"/><path d="M8 6.300h4" stroke="#a4c4f4" stroke-width=".8"/><path d="M7 9.700h6" stroke="#6d9ce8" stroke-width="1.100"/></svg><span class="t" style="left:31px;top:441px;word-spacing:-0.34px;"><span class="wd" style="width:35.0px;letter-spacing:-0.33px">Entries</span> <span class="wd" style="width:10.0px;letter-spacing:0.33px">in</span> <span class="wd" style="width:56.0px;letter-spacing:-0.20px">Categories</span> <span class="wd" style="width:5.0px;text-align:center">-</span> <span class="wd" style="width:49.0px;letter-spacing:0.15px">Weigh-In</span></span></div>
<div class="b gh" style="left:1306px;top:1090px;width:388px;height:25px;"></div>
<div class="b" style="left:1306px;top:1090px;width:3px;height:1px;background:#5a8ae0"></div>
<div class="b" style="left:1691px;top:1090px;width:3px;height:1px;background:#5a8ae0"></div>
<span class="t bd" style="left:1317px;top:1093px;letter-spacing:-0.18px;">Entries - Chart</span>
<div class="b chev" style="left:1669px;top:1094px;width:16px;height:16px;"></div>
<svg class="i" style="left:1672px;top:1097px" width="10" height="10" viewBox="0 0 10 10"><path d="M1.700 4.700l3.300-3 3.300 3M1.700 8.700l3.300-3 3.300 3" fill="none" stroke="#111" stroke-width="1.100"/></svg>
<div class="b gb" style="left:1306px;top:1115px;width:388px;height:56px;overflow:hidden;border-bottom:none"><svg class="i" style="left:11px;top:10px" width="16" height="16" viewBox="0 0 16 16"><rect x=".5" y="5.500" width="5" height="9" fill="#f26a6a" stroke="#e03434" stroke-width=".9"/><rect x="5.500" y="1.500" width="5.500" height="13" fill="#5b93ea" stroke="#2f6ad0" stroke-width=".9"/><rect x="11" y="8.500" width="4.500" height="6" fill="#58b058" stroke="#2f8a32" stroke-width=".9"/><rect x="12.300" y="10" width="1.900" height="3.300" fill="#a8dca4"/><rect x="2" y="7" width="1.600" height="6.500" fill="#f9a9a4"/><rect x="7.200" y="3" width="1.600" height="10.500" fill="#8ab6f4"/><path d="M0 14.700h16" stroke="#1a2a9a" stroke-width=".9"/></svg><span class="t" style="left:31px;top:9px;word-spacing:-0.34px;"><span class="wd" style="width:30.0px;letter-spacing:-0.14px">Clubs</span> <span class="wd" style="width:20.0px;letter-spacing:-0.01px">and</span> <span class="wd" style="width:35.0px;letter-spacing:-0.15px">entries</span></span><svg class="i" style="left:11px;top:28px" width="16" height="16" viewBox="0 0 16 16"><path d="M7 8l-6.300-.2a7 7 0 0 1 7.300-6.600z" fill="#6cc068" stroke="#3f9a42" stroke-width=".7"/><path d="M2 5.500q3-3 5-3.500M3 7q2-2.500 4-3" fill="none" stroke="#c4ecc0" stroke-width=".7"/><path d="M7.200 9.300l-.5 6.200a7 7 0 0 1-5.700-5.200z" fill="#f06060" stroke="#e02020" stroke-width=".7"/><path d="M3 11l2.500-1v3z" fill="none" stroke="#fac0c0" stroke-width=".6"/><path d="M10.500 1.300a7.300 7.300 0 0 1-2.200 14.200z" fill="#5c94ea" stroke="#2a60c0" stroke-width=".7"/><path d="M11 4c2 2 2 6 .3 8.500" fill="none" stroke="#b0cdf8" stroke-width="1"/></svg><span class="t" style="left:31px;top:27px;word-spacing:-0.34px;"><span class="wd" style="width:30.0px;letter-spacing:-0.14px">Clubs</span> <span class="wd" style="width:20.0px;letter-spacing:-0.01px">and</span> <span class="wd" style="width:35.0px;letter-spacing:-0.15px">entries</span></span><svg class="i" style="left:11px;top:46px" width="16" height="16" viewBox="0 0 16 16"><rect x=".5" y="5.500" width="5" height="9" fill="#f26a6a" stroke="#e03434" stroke-width=".9"/><rect x="5.500" y="1.500" width="5.500" height="13" fill="#5b93ea" stroke="#2f6ad0" stroke-width=".9"/><rect x="11" y="8.500" width="4.500" height="6" fill="#58b058" stroke="#2f8a32" stroke-width=".9"/><rect x="12.300" y="10" width="1.900" height="3.300" fill="#a8dca4"/><rect x="2" y="7" width="1.600" height="6.500" fill="#f9a9a4"/><rect x="7.200" y="3" width="1.600" height="10.500" fill="#8ab6f4"/><path d="M0 14.700h16" stroke="#1a2a9a" stroke-width=".9"/></svg><span class="t" style="left:31px;top:45px;word-spacing:-0.34px;"><span class="wd" style="width:31.0px;letter-spacing:-0.50px">States</span> <span class="wd" style="width:5.0px;text-align:center">/</span> <span class="wd" style="width:42.0px;letter-spacing:-0.29px">Regions</span> <span class="wd" style="width:20.0px;letter-spacing:-0.01px">and</span> <span class="wd" style="width:35.0px;letter-spacing:-0.15px">entries</span></span></div>
<div class="b" style="left:0px;top:1177px;width:1720px;height:21px;background:linear-gradient(to bottom,#a4a7af 0%,#c3c6ce 8%,#d4d6dd 24%,#dfe0e6 50%,#d8dae0 80%,#c6c8d0 100%)"></div>
<div class="b" style="left:0px;top:1198px;width:1720px;height:2px;background:linear-gradient(to bottom,#e9eaee,#fdfdfd)"></div>
<span class="t bd" style="left:5px;top:1178.5px;font-size:10.4px">2024-07-25 09:41:18:662 [INFO] Messages found 0</span>
<svg class="i" style="left:1707px;top:1186px" width="13" height="13" viewBox="0 0 13 13"><g fill="#b89a78"><rect x="9" y="1" width="2" height="2"/><rect x="5" y="5" width="2" height="2"/><rect x="9" y="5" width="2" height="2"/><rect x="1" y="9" width="2" height="2"/><rect x="5" y="9" width="2" height="2"/><rect x="9" y="9" width="2" height="2"/></g><g fill="#fff"><rect x="10" y="2" width="2" height="2"/><rect x="6" y="6" width="2" height="2"/><rect x="10" y="6" width="2" height="2"/><rect x="2" y="10" width="2" height="2"/><rect x="6" y="10" width="2" height="2"/><rect x="10" y="10" width="2" height="2"/></g></svg>
<svg class="i" style="left:0;top:0;pointer-events:none" width="1720" height="1200" viewBox="0 0 1720 1200"><clipPath id="aout"><path d="M0 0H1720V1200H0ZM161 473L392.500 559L277 586.500L250.300 701Z" clip-rule="evenodd"/></clipPath><polygon points="161,473 392.500,559 277,586.500 250.300,701" fill="none" stroke="rgba(255,255,255,0.8)" stroke-width="14" stroke-linejoin="miter" stroke-miterlimit="10" clip-path="url(#aout)"/><polygon points="161,473 392.500,559 277,586.500 250.300,701" fill="rgba(230,62,62,0.62)"/></svg>
</body></html>
